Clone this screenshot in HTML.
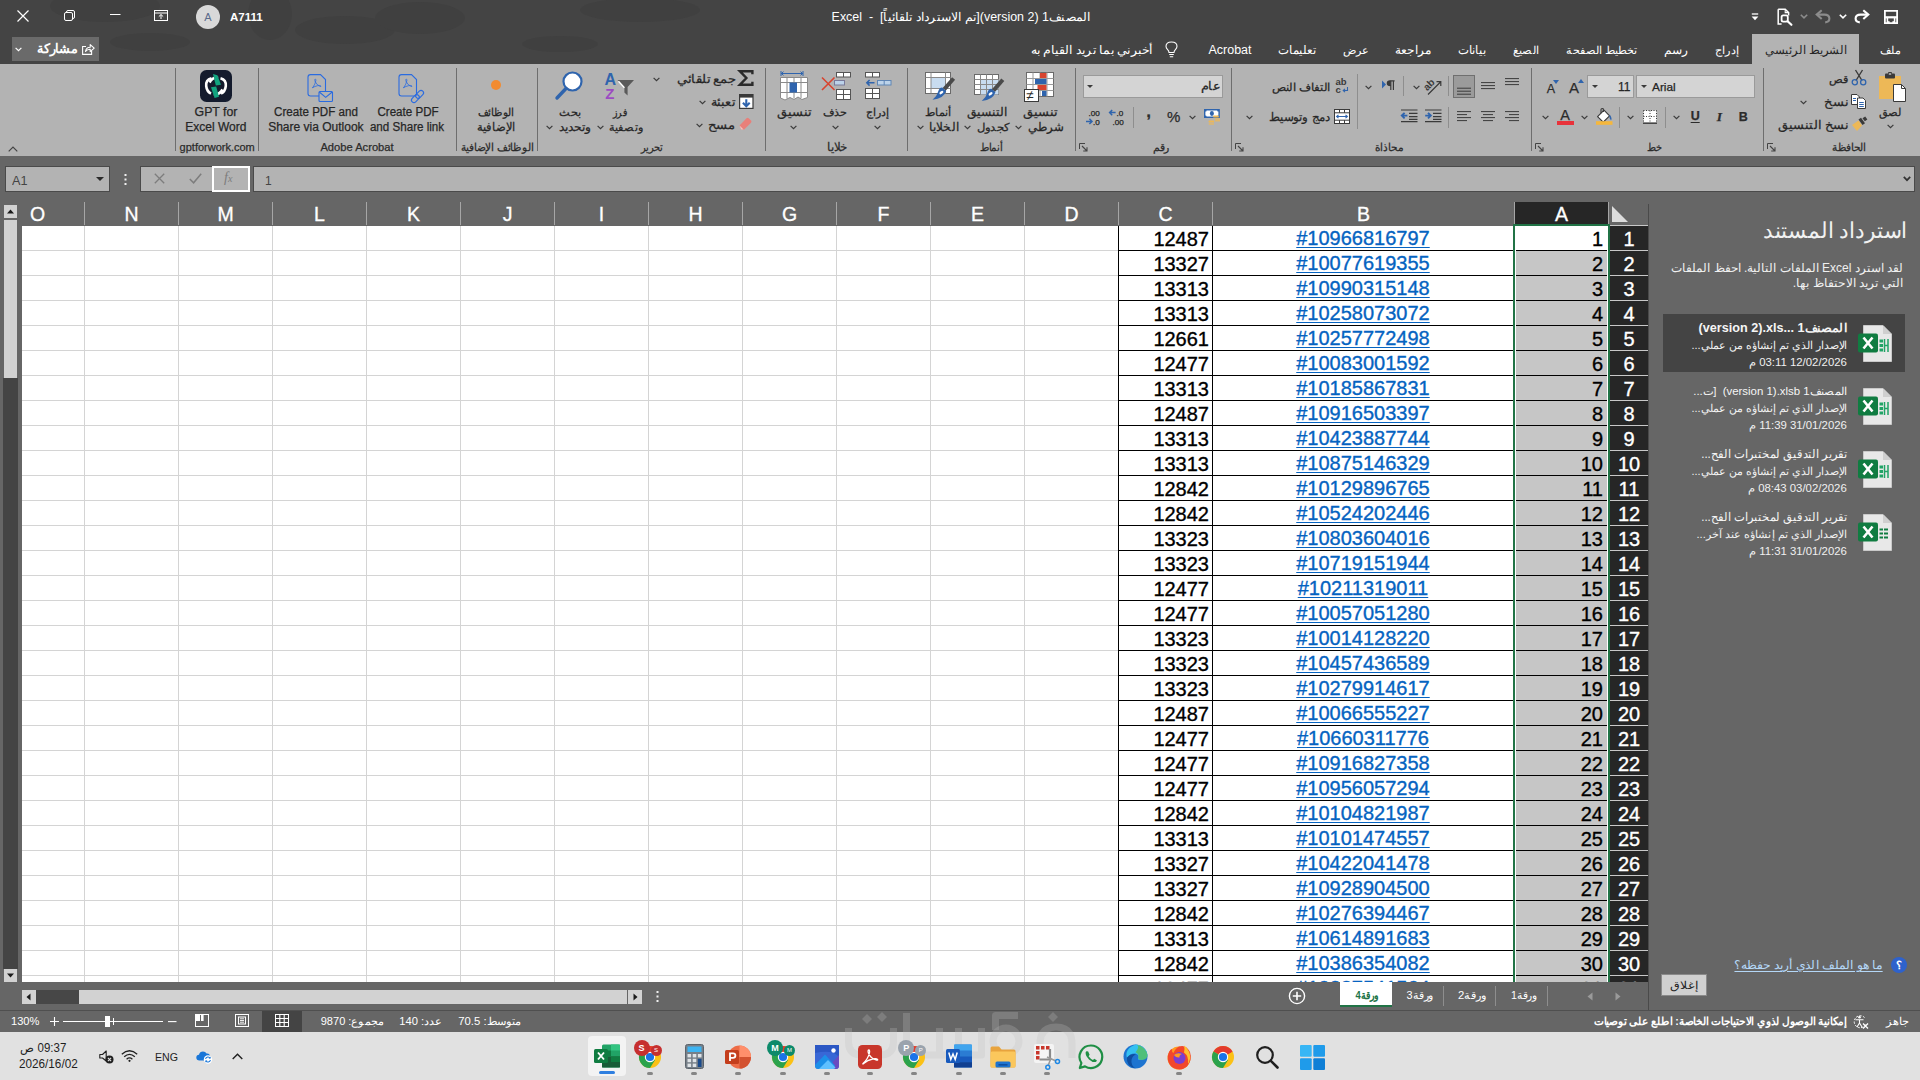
<!DOCTYPE html>
<html lang="ar">
<head>
<meta charset="utf-8">
<title>Excel</title>
<style>
*{box-sizing:border-box;margin:0;padding:0}
html,body{width:1920px;height:1080px;overflow:hidden;background:#666}
body{font-family:"Liberation Sans",sans-serif;font-size:12px;color:#262626;position:relative}
#app{position:absolute;left:0;top:0;width:1920px;height:1080px;overflow:hidden;background:#666}
.a{position:absolute}
.t{position:absolute;white-space:nowrap;line-height:16px;height:16px}
.r{direction:rtl}
.c{transform:translateX(-50%)}
svg{position:absolute;overflow:visible}
/* title */
#title{position:absolute;left:0;top:0;width:1920px;height:64px;background:#444}
.w{color:#fff}
/* ribbon */
#ribbon{position:absolute;left:0;top:64px;width:1920px;height:92px;background:#b3b3b3}
.sep{position:absolute;top:4px;width:1px;height:83px;background:#6e6e6e}
.sp2{position:absolute;width:1px;background:#8e8e8e}
.gl,.lb{-webkit-text-stroke:0.25px currentColor}
.gl{position:absolute;white-space:nowrap;top:75px;line-height:16px;font-size:12px;color:#2b2b2b;transform:translateX(-50%)}
.lb{position:absolute;white-space:nowrap;line-height:16px;font-size:12px;color:#262626}
.box{position:absolute;background:#d4d4d4;border:1px solid #9a9a9a}
/* grid */
.ch{-webkit-text-stroke:0.3px currentColor;position:absolute;top:202px;height:24px;line-height:24px;font-size:19.5px;color:#fff;text-align:center}
.ch.sel{background:#262626;height:22px}
.hs{position:absolute;top:202px;width:1px;height:23px;background:#a6a6a6}
.vl{position:absolute;top:226px;width:1px;height:756px;background:#d4d4d4}
.hl{position:absolute;left:22px;width:1096px;height:1px;background:#d4d4d4}
.bl{position:absolute;background:#000}
.gr{position:absolute;background:#217346}
.cc,.cb,.ca,.rh{position:absolute;height:25px;line-height:26px;font-size:20px;white-space:nowrap;overflow:hidden;-webkit-text-stroke:0.35px currentColor}
.cc{left:1119px;width:93px;text-align:right;padding-right:3px;color:#000;margin-top:1px}
.cb{left:1213px;width:300px;text-align:center;color:#0563c1;margin-top:0}
.cb u{text-decoration:underline;text-decoration-thickness:1px;text-underline-offset:2px}
.ca{left:1516px;width:91px;text-align:right;padding-right:4px;color:#000;background:#c6c6c6}
.ca.act{background:#fff;left:1515px;width:93px;padding-right:5px}
.rh{left:1610px;width:38px;text-align:center;color:#fff;background:#262626;border-bottom:1px solid #c8c8c8}
</style>
</head>
<body>
<div id="app">
<!-- title bar + tabs -->
<div id="title">
<svg style="left:0;top:0" width="1100" height="64" viewBox="0 0 1100 64"><g fill="#404040">
<ellipse cx="105" cy="6" rx="55" ry="16"/><ellipse cx="270" cy="14" rx="22" ry="26"/><ellipse cx="150" cy="42" rx="40" ry="9"/>
<ellipse cx="345" cy="30" rx="50" ry="14"/><ellipse cx="420" cy="18" rx="45" ry="16"/><ellipse cx="640" cy="10" rx="60" ry="12"/><ellipse cx="560" cy="44" rx="38" ry="8"/>
</g></svg>
<!-- window controls (left, RTL layout) -->
<svg style="left:17px;top:10px" width="12" height="12" viewBox="0 0 12 12"><path d="M0.5 0.5 L11.5 11.5 M11.5 0.5 L0.5 11.5" stroke="#fff" stroke-width="1.2" fill="none"/></svg>
<svg style="left:64px;top:10px" width="11" height="11" viewBox="0 0 11 11"><rect x="0.5" y="2.5" width="8" height="8" rx="1.5" stroke="#fff" fill="none"/><path d="M2.5 2.5 V2 Q2.5 0.5 4 0.5 H9 Q10.5 0.5 10.5 2 V7 Q10.5 8.5 9 8.5 H8.5" stroke="#fff" fill="none"/></svg>
<svg style="left:110px;top:14px" width="11" height="2" viewBox="0 0 11 2"><path d="M0 0.5 H10.5" stroke="#fff" stroke-width="1"/></svg>
<svg style="left:154px;top:10px" width="14" height="11" viewBox="0 0 14 11"><rect x="0.5" y="0.5" width="13" height="10" stroke="#fff" fill="none"/><path d="M0.5 3 H13.5" stroke="#fff" fill="none"/><path d="M7 9 V4.7 M4.8 6.6 L7 4.5 L9.2 6.6" stroke="#fff" fill="none" stroke-width="1"/></svg>
<!-- account -->
<div class="a" style="left:196px;top:5px;width:24px;height:24px;border-radius:12px;background:#d9d9d9"></div>
<div class="t c" style="left:208px;top:9px;font-size:11px;color:#5b6b8c">A</div>
<div class="t w" style="left:230px;top:9px;font-weight:bold;font-size:11px;transform-origin:0 50%;transform:scaleX(1.05);">A7111</div>
<!-- document title -->
<div class="t w r c" style="left:961px;top:8.5px;font-size:12px;transform:translateX(-50%) scaleX(1.0361);"><span dir="rtl">المصنف1 (version 2)[تم الاسترداد تلقائياً]</span>&nbsp; - &nbsp;<span dir="ltr">Excel</span></div>
<!-- quick access toolbar (right) -->
<svg style="left:1884px;top:10px" width="14" height="14" viewBox="0 0 14 14"><path d="M0.9 0.9 H13.1 V13.1 H0.9 Z" stroke="#fff" stroke-width="1.8" fill="none"/><rect x="1" y="6.2" width="12" height="2.2" fill="#fff"/><path d="M3.4 8 V13 M10.6 8 V13" stroke="#fff" stroke-width="1.6"/><rect x="3.4" y="11.2" width="2.2" height="2" fill="#fff"/><rect x="8.4" y="11.2" width="2.2" height="2" fill="#fff"/></svg>
<svg style="left:1854px;top:9px" width="16" height="15" viewBox="0 0 16 15"><path d="M9.3 1.2 L14.3 5.6 L9.3 10" stroke="#fff" stroke-width="2.1" fill="none" stroke-linejoin="miter"/><path d="M13.6 5.6 H6.6 Q1.6 5.6 1.6 9.6 Q1.6 13 5.8 13.4" stroke="#fff" stroke-width="2.1" fill="none"/></svg>
<svg style="left:1839px;top:13.5px" width="8" height="5" viewBox="0 0 8 5"><path d="M0.8 0.8 L4 3.9 L7.2 0.8" stroke="#fff" stroke-width="1.6" fill="none"/></svg>
<svg style="left:1815px;top:9px" width="16" height="15" viewBox="0 0 16 15"><path d="M6.7 1.2 L1.7 5.6 L6.7 10" stroke="#8c8c8c" stroke-width="2.1" fill="none"/><path d="M2.4 5.6 H9.4 Q14.4 5.6 14.4 9.6 Q14.4 13 10.2 13.4" stroke="#8c8c8c" stroke-width="2.1" fill="none"/></svg>
<svg style="left:1800px;top:13.5px" width="8" height="5" viewBox="0 0 8 5"><path d="M0.8 0.8 L4 3.9 L7.2 0.8" stroke="#8c8c8c" stroke-width="1.6" fill="none"/></svg>
<svg style="left:1777px;top:8px" width="16" height="18" viewBox="0 0 16 18"><path d="M1.2 1.2 H8.2 L11.6 4.6 V7.5 M1.2 1.2 V16 H4.6" stroke="#fff" stroke-width="1.5" fill="none"/><path d="M8.2 1.2 V4.6 H11.6" stroke="#fff" stroke-width="1.1" fill="none"/><rect x="4.6" y="7.4" width="6.2" height="6.2" rx="1.6" stroke="#fff" stroke-width="1.8" fill="none"/><path d="M10.6 13.2 L14.4 16.8" stroke="#fff" stroke-width="2.2" stroke-linecap="round"/></svg>
<svg style="left:1751px;top:13px" width="8" height="8" viewBox="0 0 8 8"><path d="M0.8 1 H7.2" stroke="#fff" stroke-width="1.3"/><path d="M0.6 3.6 H7.4 L4 7.2 Z" fill="#fff"/></svg>
<!-- share button -->
<div class="a" style="left:12px;top:37px;width:87px;height:24px;background:#6a6a6a"></div>
<svg style="left:82px;top:43px" width="13" height="12" viewBox="0 0 13 12"><path d="M4 3.5 H0.6 V11.4 H9.6 V8" stroke="#fff" stroke-width="1.1" fill="none"/><path d="M3.5 8.5 Q4 4.2 8.2 4.2 V1.6 L12.2 5.2 L8.2 8.6 V6.2 Q5.4 6 3.5 8.5 Z" stroke="#fff" stroke-width="1.1" fill="none" stroke-linejoin="round"/></svg>
<div class="t w r" style="right:1842px;top:41px;font-weight:bold;font-size:13px;transform-origin:100% 50%;transform:scaleX(0.9796);">مشاركة</div>
<svg style="left:15px;top:47px" width="7" height="5" viewBox="0 0 7 5"><path d="M0.6 0.8 L3.5 3.7 L6.4 0.8" stroke="#fff" stroke-width="1.2" fill="none"/></svg>
<!-- tabs -->
<div class="a" style="left:1752px;top:34px;width:107px;height:30px;background:#b3b3b3"></div>
<div class="t w r c" style="left:1890.5px;top:41.5px;font-size:11px;transform:translateX(-50%);">ملف</div>
<div class="t r c" style="left:1805.8px;top:41.5px;font-size:12px;transform:translateX(-50%) scaleX(0.9702);color:#262626">الشريط الرئيسي</div>
<div class="t w r c" style="left:1726.5px;top:41.5px;font-size:11px;transform:translateX(-50%) scaleX(1.0261);">إدراج</div>
<div class="t w r c" style="left:1676px;top:41.5px;font-size:12px;transform:translateX(-50%) scaleX(1.0208);">رسم</div>
<div class="t w r c" style="left:1601.7px;top:41.5px;font-size:11px;transform:translateX(-50%) scaleX(1.0143);">تخطيط الصفحة</div>
<div class="t w r c" style="left:1525.6px;top:41.5px;font-size:11px;transform:translateX(-50%) scaleX(1.02);">الصيغ</div>
<div class="t w r c" style="left:1472.2px;top:41.5px;font-size:12px;transform:translateX(-50%) scaleX(0.9759);">بيانات</div>
<div class="t w r c" style="left:1413.3px;top:41.5px;font-size:12px;transform:translateX(-50%) scaleX(1.0057);">مراجعة</div>
<div class="t w r c" style="left:1356.2px;top:41.5px;font-size:11px;transform:translateX(-50%) scaleX(1.0115);">عرض</div>
<div class="t w r c" style="left:1297.3px;top:41.5px;font-size:12px;transform:translateX(-50%) scaleX(0.9769);">تعليمات</div>
<div class="t w c" style="left:1229.6px;top:41.5px;font-size:12px;transform:translateX(-50%) scaleX(1.0381);">Acrobat</div>
<svg style="left:1165px;top:41px" width="13" height="17" viewBox="0 0 13 17"><path d="M4 11.5 Q4 10 2.6 8.6 Q1 7 1 5.3 Q1 1 6.5 1 Q12 1 12 5.3 Q12 7 10.4 8.6 Q9 10 9 11.5 Z" stroke="#fff" stroke-width="1.1" fill="none"/><path d="M4.2 13.5 H8.8 M4.8 15.8 H8.2" stroke="#fff" stroke-width="1.1"/></svg>
<div class="t w r" style="right:768px;top:41.5px;font-size:12px;transform-origin:100% 50%;transform:scaleX(1.0371);">أخبرني بما تريد القيام به</div>
</div>
<!-- ribbon -->
<div id="ribbon">
<div class="sep" style="left:175px"></div>
<div class="sep" style="left:258px"></div>
<div class="sep" style="left:456px"></div>
<div class="sep" style="left:537px"></div>
<div class="sep" style="left:765px"></div>
<div class="sep" style="left:907px"></div>
<div class="sep" style="left:1075px"></div>
<div class="sep" style="left:1231px"></div>
<div class="sep" style="left:1531px"></div>
<div class="sep" style="left:1763px"></div>
<svg style="left:8px;top:82px" width="10" height="6" viewBox="0 0 10 6"><path d="M0.7 5.3 L5 1 L9.3 5.3" stroke="#444" stroke-width="1.2" fill="none"/></svg>
<!-- clipboard -->
<svg style="left:1878px;top:8px" width="29" height="31" viewBox="0 0 29 31"><rect x="1" y="4" width="22" height="23" fill="#edb857"/><rect x="7" y="1.5" width="10" height="5" rx="1" fill="#3a3a3a"/><rect x="10" y="0" width="4" height="3" rx="1" fill="#3a3a3a"/><rect x="10.8" y="1.2" width="2.4" height="1.6" fill="#b3b3b3"/><path d="M15.5 12.5 H23.5 L27.5 16.5 V29.5 H15.5 Z" fill="#fff" stroke="#3a3a3a" stroke-width="1"/><path d="M23.5 12.5 V16.5 H27.5" fill="none" stroke="#3a3a3a"/></svg>
<div class="lb r" style="top:39.6px;font-size:11px;color:#262626;left:1890.4px;transform:translateX(-50%) scaleX(1.0227);">لصق</div>
<svg style="left:1887px;top:60px" width="7" height="5" viewBox="0 0 7 5"><path d="M0.6 0.8 L3.5 3.7 L6.4 0.8" stroke="#3b3b3b" stroke-width="1.2" fill="none"/></svg>
<svg style="left:1851px;top:5px" width="16" height="17" viewBox="0 0 16 17"><path d="M4.5 1 L11 11.5 M11.5 1 L5 11.5" stroke="#3a3a3a" stroke-width="1.4" fill="none"/><circle cx="3.8" cy="13.2" r="2.6" stroke="#2f64ad" stroke-width="1.3" fill="none"/><circle cx="12.2" cy="13.2" r="2.6" stroke="#2f64ad" stroke-width="1.3" fill="none"/></svg>
<div class="lb r" style="top:6.5px;font-size:11px;color:#262626;right:72px;transform-origin:100% 50%;transform:scaleX(1.0278);">قص</div>
<svg style="left:1851px;top:30px" width="16" height="15" viewBox="0 0 16 15"><path d="M0.5 0.5 H6 L8.5 3 V10.5 H0.5 Z" fill="#fff" stroke="#3a3a3a"/><path d="M6.5 4 H12 L14.5 6.5 V14.5 H6.5 Z" fill="#fff" stroke="#3a3a3a"/><path d="M8.2 8.5 H12.8 M8.2 10.5 H12.8 M8.2 12.5 H12.8" stroke="#2f64ad" stroke-width="1"/><path d="M2 4.5 H5 M2 6.5 H5" stroke="#2f64ad" stroke-width="1"/></svg>
<div class="lb r" style="top:29.5px;font-size:12px;color:#262626;right:72px;transform-origin:100% 50%;transform:scaleX(1.0773);">نسخ</div>
<svg style="left:1799.5px;top:35.5px" width="7" height="5" viewBox="0 0 7 5"><path d="M0.6 0.8 L3.5 3.7 L6.4 0.8" stroke="#3b3b3b" stroke-width="1.2" fill="none"/></svg>
<svg style="left:1851px;top:52px" width="17" height="16" viewBox="0 0 17 16"><path d="M1 9 L7.5 4.5 L11 9.5 L6 15 Z" fill="#edb857"/><path d="M7.5 3.5 L10 1.8 L14 7.2 L11.5 9 Z" fill="#3a3a3a"/><path d="M11.5 2.2 L14.2 0.4 L16.4 3.4 L13.8 5.2 Z" fill="#3a3a3a"/></svg>
<div class="lb r" style="top:52.5px;font-size:12px;color:#262626;right:72px;transform-origin:100% 50%;transform:scaleX(1.0708);">نسخ التنسيق</div>
<div class="gl r" style="left:1849px;font-size:11px;transform:translateX(-50%) scaleX(0.9583);">الحافظة</div>
<svg style="left:1767px;top:79px" width="9" height="9" viewBox="0 0 9 9"><path d="M0.5 6 V0.5 H6" stroke="#444" fill="none"/><path d="M3 3 L8 8 M8 4.2 V8 H4.2" stroke="#444" stroke-width="1.1" fill="none"/></svg>
<!-- font -->
<div class="box" style="left:1636px;top:11px;width:119px;height:23px"></div>
<div class="lb" style="top:15px;font-size:11px;color:#262626;left:1652px;transform-origin:0 50%;transform:scaleX(1.0762);">Arial</div>
<svg style="left:1640.5px;top:21px" width="6" height="3" viewBox="0 0 6 3"><path d="M0 0 H6 L3 3 Z" fill="#3b3b3b"/></svg>
<div class="box" style="left:1587px;top:11px;width:47px;height:23px"></div>
<div class="lb" style="top:15px;font-size:12px;color:#262626;right:289.5px;">11</div>
<svg style="left:1591.5px;top:21px" width="6" height="3" viewBox="0 0 6 3"><path d="M0 0 H6 L3 3 Z" fill="#3b3b3b"/></svg>
<div class="lb" style="top:15.5px;font-size:15px;color:#2b2b2b;left:1574px;transform:translateX(-50%);">A</div>
<svg style="left:1577.5px;top:15px" width="6" height="4" viewBox="0 0 6 4"><path d="M0 4 H6 L3 0 Z" fill="#2f64ad"/></svg>
<div class="lb" style="top:16.5px;font-size:12.5px;color:#2b2b2b;left:1551px;transform:translateX(-50%);">A</div>
<svg style="left:1553px;top:15.5px" width="6" height="4" viewBox="0 0 6 4"><path d="M0 0 H6 L3 4 Z" fill="#2f64ad"/></svg>
<div class="lb" style="top:44.5px;font-size:12.5px;color:#2b2b2b;font-weight:bold;left:1743.3px;transform:translateX(-50%);">B</div>
<div class="lb" style="top:44.5px;font-size:14px;color:#2b2b2b;font-weight:bold;left:1719.5px;transform:translateX(-50%);font-style:italic;font-family:'Liberation Serif',serif;font-size:13.5px;">I</div>
<div class="lb" style="top:44px;font-size:12.5px;color:#2b2b2b;font-weight:bold;left:1695.2px;transform:translateX(-50%);text-decoration:underline;text-underline-offset:2px;">U</div>
<svg style="left:1672.8px;top:51px" width="7" height="5" viewBox="0 0 7 5"><path d="M0.6 0.8 L3.5 3.7 L6.4 0.8" stroke="#3b3b3b" stroke-width="1.2" fill="none"/></svg>
<div class="sp2" style="left:1665px;top:43px;height:21px"></div>
<svg style="left:1643px;top:46px" width="14" height="14" viewBox="0 0 14 14"><rect x="0.5" y="0.5" width="13" height="12" fill="#fff"/><path d="M0.5 0.5 H13.5 M0.5 6.5 H13.5 M0.5 0.5 V12.5 M7 0.5 V12.5 M13.5 0.5 V12.5" stroke="#3a3a3a" stroke-width="1" stroke-dasharray="1 1.5" fill="none"/><path d="M0 13.2 H14" stroke="#3a3a3a" stroke-width="1.4"/></svg>
<svg style="left:1626.9px;top:51px" width="7" height="5" viewBox="0 0 7 5"><path d="M0.6 0.8 L3.5 3.7 L6.4 0.8" stroke="#3b3b3b" stroke-width="1.2" fill="none"/></svg>
<div class="sp2" style="left:1619px;top:43px;height:21px"></div>
<svg style="left:1596px;top:44px" width="17" height="17" viewBox="0 0 17 17"><path d="M1.6 8.6 L8 2.2 L13.6 7.8 L7.2 14.2 Z" fill="#fff" stroke="#3a3a3a" stroke-width="1.2" stroke-linejoin="round"/><path d="M7.4 4 V1.6 Q7.4 0.5 6.2 0.5 Q5 0.5 5 1.6 V5.2" stroke="#3a3a3a" stroke-width="1.1" fill="none"/><path d="M13.4 6.4 Q16.6 9.6 15 12.6 Q13 10.6 13.4 6.4 Z" fill="#2f64ad"/><rect x="0" y="13.2" width="16.5" height="3.6" fill="#f5b73c"/></svg>
<svg style="left:1580.7px;top:51px" width="7" height="5" viewBox="0 0 7 5"><path d="M0.6 0.8 L3.5 3.7 L6.4 0.8" stroke="#3b3b3b" stroke-width="1.2" fill="none"/></svg>
<div class="lb" style="top:43.3px;font-size:14.5px;color:#2b2b2b;left:1565px;transform:translateX(-50%);">A</div>
<div class="a" style="left:1557px;top:57.2px;width:16.5px;height:3.6px;background:#e8323a"></div>
<svg style="left:1541.9px;top:51px" width="7" height="5" viewBox="0 0 7 5"><path d="M0.6 0.8 L3.5 3.7 L6.4 0.8" stroke="#3b3b3b" stroke-width="1.2" fill="none"/></svg>
<div class="gl r" style="left:1654.8px;font-size:11px;transform:translateX(-50%) scaleX(0.8824);">خط</div>
<svg style="left:1535px;top:79px" width="9" height="9" viewBox="0 0 9 9"><path d="M0.5 6 V0.5 H6" stroke="#444" fill="none"/><path d="M3 3 L8 8 M8 4.2 V8 H4.2" stroke="#444" stroke-width="1.1" fill="none"/></svg>
<!-- alignment -->
<svg style="left:1505px;top:12px" width="14" height="20" viewBox="0 0 14 20"><path d="M0 2.6 H14 M0 5.6 H14 M0 8.6 H14 " stroke="#3a3a3a" stroke-width="1" fill="none"/></svg>
<svg style="left:1481px;top:12px" width="14" height="20" viewBox="0 0 14 20"><path d="M0 6.6 H14 M0 9.6 H14 M0 12.6 H14 " stroke="#3a3a3a" stroke-width="1" fill="none"/></svg>
<div class="a" style="left:1453px;top:11px;width:22px;height:23px;background:#9b9b9b;border:1px solid #6f6f6f"></div>
<svg style="left:1457px;top:12px" width="14" height="20" viewBox="0 0 14 20"><path d="M0 12.2 H14 M0 15.2 H14 M0 18.2 H14 " stroke="#3a3a3a" stroke-width="1" fill="none"/></svg>
<div class="sp2" style="left:1448px;top:12px;height:20px"></div>
<svg style="left:1424px;top:13px" width="18" height="18" viewBox="0 0 18 18"><text x="1" y="11" font-size="10" font-family="Liberation Sans" fill="#3a3a3a" transform="rotate(-45 6 10)" style="font-weight:bold">ab</text><path d="M4 17.5 L16.5 5 M12.5 4.6 L16.8 4.6 L16.8 9" stroke="#3a3a3a" stroke-width="1.2" fill="none"/></svg>
<svg style="left:1412.5px;top:20.5px" width="7" height="5" viewBox="0 0 7 5"><path d="M0.6 0.8 L3.5 3.7 L6.4 0.8" stroke="#3b3b3b" stroke-width="1.2" fill="none"/></svg>
<div class="sp2" style="left:1403px;top:12px;height:20px"></div>
<svg style="left:1382px;top:16px" width="13" height="11" viewBox="0 0 13 11"><path d="M0 0.5 L4 4.5 L0 8.5 Z" fill="#2f64ad"/><path d="M8.8 10 V0.8 M11.4 10 V0.8 M12.6 0.8 H8 Q5.3 0.8 5.3 3.2 Q5.3 5.6 8.6 5.6" stroke="#3a3a3a" stroke-width="1.2" fill="none"/><path d="M8.6 0.8 Q5.3 0.8 5.3 3.2 Q5.3 5.6 8.6 5.6 Z" fill="#3a3a3a"/></svg>
<svg style="left:1364.9px;top:20.5px" width="7" height="5" viewBox="0 0 7 5"><path d="M0.6 0.8 L3.5 3.7 L6.4 0.8" stroke="#3b3b3b" stroke-width="1.2" fill="none"/></svg>
<div class="sp2" style="left:1357px;top:10px;height:55px"></div>
<svg style="left:1335px;top:13px" width="14" height="18" viewBox="0 0 14 18"><text x="0.5" y="7.5" font-size="9.5" font-family="Liberation Sans" fill="#3a3a3a" style="font-weight:bold">ab</text><text x="0.5" y="15.5" font-size="9.5" font-family="Liberation Sans" fill="#3a3a3a" style="font-weight:bold">c</text><path d="M12.5 10 V13.5 H8.2 M10 11.8 L8.2 13.5 L10 15.2" stroke="#2f64ad" stroke-width="1.1" fill="none"/></svg>
<div class="lb r" style="top:14.5px;font-size:11px;color:#262626;right:589.5px;transform-origin:100% 50%;transform:scaleX(1.0685);">التفاف النص</div>
<svg style="left:1505px;top:46px" width="14" height="14" viewBox="0 0 14 14"><path d="M0 1.6 H14 M4 4.6 H14 M0 7.6 H14 M4 10.6 H14 " stroke="#3a3a3a" stroke-width="1" fill="none"/></svg>
<svg style="left:1481px;top:46px" width="14" height="14" viewBox="0 0 14 14"><path d="M0 1.6 H14 M2 4.6 H12 M0 7.6 H14 M2 10.6 H12 " stroke="#3a3a3a" stroke-width="1" fill="none"/></svg>
<svg style="left:1457px;top:46px" width="14" height="14" viewBox="0 0 14 14"><path d="M0 1.6 H14 M0 4.6 H10 M0 7.6 H14 M0 10.6 H10 " stroke="#3a3a3a" stroke-width="1" fill="none"/></svg>
<div class="sp2" style="left:1448px;top:43px;height:21px"></div>
<svg style="left:1424.5px;top:45px" width="17" height="14" viewBox="0 0 17 14"><path d="M0 1 H16.5 M8 4.4 H16.5 M8 7.6 H16.5 M0 12.6 H16.5 M8 10.4 H16.5" stroke="#3a3a3a" stroke-width="1.1" fill="none"/><path d="M0.2 6.6 H5.8 M3 3.8 L5.8 6.6 L3 9.4" stroke="#2f64ad" stroke-width="1.9" fill="none"/></svg>
<svg style="left:1401px;top:45px" width="17" height="14" viewBox="0 0 17 14"><path d="M0 1 H16.5 M8 4.4 H16.5 M8 7.6 H16.5 M0 12.6 H16.5 M8 10.4 H16.5" stroke="#3a3a3a" stroke-width="1.1" fill="none"/><path d="M0.8 6.6 H6.4 M3.6 3.8 L0.8 6.6 L3.6 9.4" stroke="#2f64ad" stroke-width="1.9" fill="none"/></svg>
<svg style="left:1334px;top:45px" width="16" height="15" viewBox="0 0 16 15"><rect x="0.5" y="0.5" width="15" height="14" fill="#fff" stroke="#3a3a3a"/><path d="M0.5 3.8 H15.5 M0.5 11.2 H15.5 M5.5 0.5 V3.8 M10.5 0.5 V3.8 M5.5 11.2 V14.5 M10.5 11.2 V14.5" stroke="#3a3a3a" stroke-width="1" fill="none"/><path d="M2.5 7.5 H13.5 M4.5 5.8 L2.6 7.5 L4.5 9.2 M11.5 5.8 L13.4 7.5 L11.5 9.2" stroke="#2f64ad" stroke-width="1.1" fill="none"/></svg>
<div class="lb r" style="top:44.5px;font-size:12px;color:#262626;right:589.5px;transform-origin:100% 50%;transform:scaleX(0.9871);">دمج وتوسيط</div>
<svg style="left:1245.9px;top:51px" width="7" height="5" viewBox="0 0 7 5"><path d="M0.6 0.8 L3.5 3.7 L6.4 0.8" stroke="#3b3b3b" stroke-width="1.2" fill="none"/></svg>
<div class="gl r" style="left:1389px;font-size:11px;transform:translateX(-50%) scaleX(0.9533);">محاذاة</div>
<svg style="left:1235px;top:79px" width="9" height="9" viewBox="0 0 9 9"><path d="M0.5 6 V0.5 H6" stroke="#444" fill="none"/><path d="M3 3 L8 8 M8 4.2 V8 H4.2" stroke="#444" stroke-width="1.1" fill="none"/></svg>
<!-- number -->
<div class="box" style="left:1083px;top:11px;width:140px;height:23px"></div>
<div class="lb r" style="top:14px;font-size:12px;color:#262626;right:700.5px;transform-origin:100% 50%;transform:scaleX(1.0611);">عام</div>
<svg style="left:1087.4px;top:21px" width="6" height="3" viewBox="0 0 6 3"><path d="M0 0 H6 L3 3 Z" fill="#3b3b3b"/></svg>
<svg style="left:1203.5px;top:45px" width="17" height="16" viewBox="0 0 17 16"><rect x="0" y="0" width="15.8" height="9" fill="#2f64ad"/><path d="M1.4 2.6 Q2.6 2.6 2.6 1.4 H13.2 Q13.2 2.6 14.4 2.6 V6.4 Q13.2 6.4 13.2 7.6 H2.6 Q2.6 6.4 1.4 6.4 Z" fill="#fff"/><ellipse cx="7.9" cy="4.5" rx="2" ry="2.4" fill="#2f64ad"/><g fill="#edb857"><rect x="9.2" y="6.4" width="5.6" height="2.2" rx="0.6"/><rect x="11" y="9.4" width="5" height="1.2"/><rect x="11" y="11.2" width="5" height="1.2"/><rect x="4.6" y="11.4" width="5.6" height="2.2" rx="0.6"/><rect x="4.8" y="14.4" width="5.2" height="1.2"/></g></svg>
<svg style="left:1188.7px;top:51px" width="7" height="5" viewBox="0 0 7 5"><path d="M0.6 0.8 L3.5 3.7 L6.4 0.8" stroke="#3b3b3b" stroke-width="1.2" fill="none"/></svg>
<div class="lb" style="top:45px;font-size:15px;color:#2b2b2b;left:1173.6px;transform:translateX(-50%);">%</div>
<div class="lb" style="top:39.5px;font-size:17px;color:#2b2b2b;font-weight:bold;left:1148.5px;transform:translateX(-50%);">,</div>
<div class="sp2" style="left:1133px;top:43px;height:21px"></div>
<svg style="left:1109.4px;top:45px" width="17" height="17" viewBox="0 0 17 17"><path d="M0.6 3.6 H6.6 M3.2 1 L0.6 3.6 L3.2 6.2" stroke="#2f64ad" stroke-width="1.5" fill="none"/><text x="7.6" y="7" font-size="8.1" font-family="Liberation Sans" fill="#222" stroke="#222" stroke-width="0.25">.0</text><text x="3.4" y="15.6" font-size="8.1" font-family="Liberation Sans" fill="#222" stroke="#222" stroke-width="0.25">.00</text></svg>
<svg style="left:1085.6px;top:45px" width="17" height="17" viewBox="0 0 17 17"><path d="M0 12.4 H6 M3.4 9.8 L6 12.4 L3.4 15" stroke="#2f64ad" stroke-width="1.5" fill="none"/><text x="2.6" y="7" font-size="8.1" font-family="Liberation Sans" fill="#222" stroke="#222" stroke-width="0.25">.00</text><text x="7" y="15.6" font-size="8.1" font-family="Liberation Sans" fill="#222" stroke="#222" stroke-width="0.25">.0</text></svg>
<div class="gl r" style="left:1161.2px;font-size:11px;transform:translateX(-50%) scaleX(0.9882);">رقم</div>
<svg style="left:1079px;top:79px" width="9" height="9" viewBox="0 0 9 9"><path d="M0.5 6 V0.5 H6" stroke="#444" fill="none"/><path d="M3 3 L8 8 M8 4.2 V8 H4.2" stroke="#444" stroke-width="1.1" fill="none"/></svg>
<!-- styles -->
<svg style="left:1024px;top:8px" width="30" height="30" viewBox="0 0 30 30"><rect x="2.5" y="0.5" width="27" height="24" fill="#fff" stroke="#6a6a6a"/><path d="M2.5 6.5 H29.5 M2.5 12.5 H29.5 M2.5 18.5 H29.5 M9 0.5 V24.5 M16 0.5 V24.5 M23 0.5 V24.5" stroke="#9a9a9a" stroke-width="1" fill="none"/><rect x="16" y="1" width="6.5" height="5" fill="#d8442f"/><rect x="11" y="7" width="11.5" height="5" fill="#2f64ad"/><rect x="13.5" y="13" width="9" height="5" fill="#d8442f"/><rect x="18" y="19" width="4.5" height="5" fill="#2f64ad"/><rect x="0.5" y="17.5" width="14" height="12" fill="#fff" stroke="#3a3a3a"/><text x="2.2" y="28.2" font-size="13.5" font-family="Liberation Sans" fill="#2b2b2b">≠</text></svg>
<div class="lb r" style="top:40px;font-size:12px;color:#262626;left:1039.5px;transform:translateX(-50%) scaleX(1.0781);">تنسيق</div>
<div class="lb r" style="top:54.5px;font-size:12px;color:#262626;left:1045.6px;transform:translateX(-50%) scaleX(0.9811);">شرطي</div>
<svg style="left:1015px;top:60.5px" width="7" height="5" viewBox="0 0 7 5"><path d="M0.6 0.8 L3.5 3.7 L6.4 0.8" stroke="#3b3b3b" stroke-width="1.2" fill="none"/></svg>
<svg style="left:974px;top:10px" width="30" height="28" viewBox="0 0 30 28"><rect x="0.5" y="0.5" width="24" height="20" fill="#fff" stroke="#6a6a6a"/><rect x="6.5" y="5.5" width="18" height="15" fill="#c8dcf0"/><path d="M0.5 5.5 H24.5 M0.5 10.5 H24.5 M0.5 15.5 H24.5 M6.5 0.5 V20.5 M12.5 0.5 V20.5 M18.5 0.5 V20.5" stroke="#8a8a8a" stroke-width="1" fill="none"/><g transform="translate(0.2 -0.8)"><path d="M30.1 7.8 L27.1 5.2 L17.7 16.1 L20.7 18.7 Z" fill="#4a4a4a"/><path d="M17.2 15.6 L21.2 19 Q19 26.4 7.5 27.8 Q12 24 13 20 Q14.4 15.4 17.2 15.6 Z" fill="#2f64ad"/><ellipse cx="16.4" cy="20.6" rx="2.3" ry="1.3" fill="#fff" transform="rotate(-38 16.4 20.6)"/></g></svg>
<div class="lb r" style="top:40px;font-size:12px;color:#262626;left:986.9px;transform:translateX(-50%) scaleX(1.025);">التنسيق</div>
<div class="lb r" style="top:54.5px;font-size:11px;color:#262626;left:992.5px;transform:translateX(-50%) scaleX(1.0581);">كجدول</div>
<svg style="left:964px;top:60.5px" width="7" height="5" viewBox="0 0 7 5"><path d="M0.6 0.8 L3.5 3.7 L6.4 0.8" stroke="#3b3b3b" stroke-width="1.2" fill="none"/></svg>
<svg style="left:925px;top:8px" width="30" height="30" viewBox="0 0 30 30"><rect x="0.5" y="0.5" width="25" height="21" fill="#fff" stroke="#6a6a6a"/><rect x="6" y="5.5" width="14.5" height="11" fill="#c8dcf0"/><path d="M0.5 5.5 H25.5 M0.5 16.5 H25.5 M6 0.5 V21.5 M20.5 0.5 V21.5" stroke="#8a8a8a" stroke-width="1" fill="none"/><path d="M30.1 7.8 L27.1 5.2 L17.7 16.1 L20.7 18.7 Z" fill="#4a4a4a"/><path d="M17.2 15.6 L21.2 19 Q19 26.4 7.5 27.8 Q12 24 13 20 Q14.4 15.4 17.2 15.6 Z" fill="#2f64ad"/><ellipse cx="16.4" cy="20.6" rx="2.3" ry="1.3" fill="#fff" transform="rotate(-38 16.4 20.6)"/></svg>
<div class="lb r" style="top:40px;font-size:11px;color:#262626;left:938px;transform:translateX(-50%) scaleX(1.02);">أنماط</div>
<div class="lb r" style="top:54.5px;font-size:12px;color:#262626;left:943.8px;transform:translateX(-50%) scaleX(1.0069);">الخلايا</div>
<svg style="left:917px;top:60.5px" width="7" height="5" viewBox="0 0 7 5"><path d="M0.6 0.8 L3.5 3.7 L6.4 0.8" stroke="#3b3b3b" stroke-width="1.2" fill="none"/></svg>
<div class="gl r" style="left:991.2px;font-size:11px;transform:translateX(-50%) scaleX(0.92);">أنماط</div>
<!-- cells -->
<svg style="left:865px;top:8px" width="27" height="28" viewBox="0 0 27 28"><rect x="0.5" y="0.5" width="14" height="4.5" fill="#fff" stroke="#555"/><path d="M7.5 0.5 V5.0" stroke="#555"/><rect x="0.5" y="16.5" width="14" height="10" fill="#fff" stroke="#555"/><path d="M7.5 16.5 V26.5" stroke="#555"/><path d="M0.5 21.5 H14.5" stroke="#555"/><rect x="12.5" y="8.5" width="13.5" height="4.5" fill="#bcd3ea" stroke="#5f86b5"/><path d="M19.2 8.5 V13" stroke="#5f86b5"/><path d="M2 10.8 H9.5 M4.6 8 L1.8 10.8 L4.6 13.6" stroke="#2f64ad" stroke-width="1.5" fill="none"/></svg>
<div class="lb r" style="top:40.2px;font-size:11px;color:#262626;left:877.6px;transform:translateX(-50%);">إدراج</div>
<svg style="left:874px;top:60.6px" width="7" height="5" viewBox="0 0 7 5"><path d="M0.6 0.8 L3.5 3.7 L6.4 0.8" stroke="#3b3b3b" stroke-width="1.2" fill="none"/></svg>
<svg style="left:821px;top:8px" width="30" height="28" viewBox="0 0 30 28"><rect x="15.5" y="0.5" width="14" height="4.5" fill="#fff" stroke="#555"/><path d="M22.5 0.5 V5.0" stroke="#555"/><rect x="15.5" y="17.5" width="14" height="10" fill="#fff" stroke="#555"/><path d="M22.5 17.5 V27.5" stroke="#555"/><path d="M15.5 22.5 H29.5" stroke="#555"/><rect x="13.5" y="8.5" width="10" height="4.5" fill="#bcd3ea" stroke="#7a7a9a"/><path d="M1 5.5 L13.5 18 M13.5 5.5 L1 18" stroke="#d8442f" stroke-width="1.6" fill="none"/></svg>
<div class="lb r" style="top:40.2px;font-size:11px;color:#262626;left:835.3px;transform:translateX(-50%) scaleX(1.0167);">حذف</div>
<svg style="left:832px;top:60.6px" width="7" height="5" viewBox="0 0 7 5"><path d="M0.6 0.8 L3.5 3.7 L6.4 0.8" stroke="#3b3b3b" stroke-width="1.2" fill="none"/></svg>
<svg style="left:780px;top:6px" width="28" height="32" viewBox="0 0 28 32"><path d="M1 3.5 H23 M1 1 V6 M23 1 V6 M3.5 1.6 L1.4 3.5 L3.5 5.4 M20.5 1.6 L22.6 3.5 L20.5 5.4" stroke="#2f64ad" stroke-width="1" fill="none"/><path d="M0.5 7.5 H27.5 V27.5 L22 29.5 L18 27 L14 29.5 L10 27.5 L5 30 L0.5 28 Z" fill="#fff" stroke="#8a8a8a" stroke-width="1"/><path d="M0.5 12.5 H27.5 M0.5 22.5 H27.5 M7 7.5 V28.5 M21 7.5 V28 M14 22.5 V28.5 M14 7.5 V12.5" stroke="#8a8a8a" stroke-width="1" fill="none"/><rect x="9.5" y="12.5" width="7.5" height="10" fill="#2f64ad"/></svg>
<div class="lb r" style="top:40.2px;font-size:12px;color:#262626;left:793.6px;transform:translateX(-50%) scaleX(1.0719);">تنسيق</div>
<svg style="left:790px;top:60.6px" width="7" height="5" viewBox="0 0 7 5"><path d="M0.6 0.8 L3.5 3.7 L6.4 0.8" stroke="#3b3b3b" stroke-width="1.2" fill="none"/></svg>
<div class="gl r" style="left:836.5px;font-size:12px;transform:translateX(-50%) scaleX(0.9857);">خلايا</div>
<!-- editing -->
<svg style="left:738px;top:6px" width="16" height="16" viewBox="0 0 16 16"><path d="M14.4 4.2 V1.2 H1.8 L8.4 8 L1.8 14.8 H14.4 V11.8" stroke="#2b2b2b" stroke-width="2.4" fill="none" stroke-linejoin="miter"/></svg>
<div class="lb r" style="top:7px;font-size:12px;color:#262626;right:1184.8px;transform-origin:100% 50%;transform:scaleX(1.0925);">جمع تلقائي</div>
<svg style="left:652.8px;top:13px" width="7" height="5" viewBox="0 0 7 5"><path d="M0.6 0.8 L3.5 3.7 L6.4 0.8" stroke="#3b3b3b" stroke-width="1.2" fill="none"/></svg>
<svg style="left:739px;top:29.5px" width="15" height="15" viewBox="0 0 15 15"><rect x="0.6" y="0.6" width="13.4" height="13.8" fill="#fff" stroke="#3a3a3a" stroke-width="1.2"/><rect x="0.6" y="0.6" width="13.4" height="3" fill="#3a3a3a"/><path d="M7.3 5.2 V12 M3.9 8.8 L7.3 12.2 L10.7 8.8" stroke="#2f64ad" stroke-width="2.1" fill="none"/></svg>
<div class="lb r" style="top:29.5px;font-size:12px;color:#262626;right:1184.8px;transform-origin:100% 50%;transform:scaleX(1.0609);">تعبئة</div>
<svg style="left:698.8px;top:36px" width="7" height="5" viewBox="0 0 7 5"><path d="M0.6 0.8 L3.5 3.7 L6.4 0.8" stroke="#3b3b3b" stroke-width="1.2" fill="none"/></svg>
<svg style="left:739px;top:53px" width="13" height="13" viewBox="0 0 13 13"><path d="M0.5 8.5 L7.5 1.2 Q8.6 0.2 9.7 1.2 L12 3.5 Q13 4.6 12 5.7 L5.2 12.6 H2.2 Z" fill="#e8807a"/><path d="M0.5 8.5 L4.6 12.6 H2.2 Z" fill="#f3c4c0"/></svg>
<div class="lb r" style="top:52.5px;font-size:12px;color:#262626;right:1184.8px;transform-origin:100% 50%;transform:scaleX(1.096);">مسح</div>
<svg style="left:695.7px;top:59px" width="7" height="5" viewBox="0 0 7 5"><path d="M0.6 0.8 L3.5 3.7 L6.4 0.8" stroke="#3b3b3b" stroke-width="1.2" fill="none"/></svg>
<svg style="left:605px;top:8px" width="30" height="28" viewBox="0 0 30 28"><text x="-0.5" y="12.5" font-size="16" font-family="Liberation Sans" fill="#2f64ad" style="font-weight:bold">A</text><text x="0.3" y="27" font-size="15" font-family="Liberation Sans" fill="#9c4bc2" style="font-weight:bold">Z</text><path d="M12.5 8 H29 L22.6 15 V23.5 L19.4 20.5 V15 Z" fill="#5a5a5a"/><path d="M13.5 9.2 L19.4 15.8" stroke="#fff" stroke-width="1.3"/></svg>
<div class="lb r" style="top:40.2px;font-size:11px;color:#262626;left:620.4px;transform:translateX(-50%) scaleX(0.8375);">فرز</div>
<div class="lb r" style="top:54.5px;font-size:11px;color:#262626;left:626px;transform:translateX(-50%) scaleX(1.0152);">وتصفية</div>
<svg style="left:596.5px;top:60.5px" width="7" height="5" viewBox="0 0 7 5"><path d="M0.6 0.8 L3.5 3.7 L6.4 0.8" stroke="#3b3b3b" stroke-width="1.2" fill="none"/></svg>
<svg style="left:555px;top:7px" width="30" height="30" viewBox="0 0 30 30"><circle cx="17.5" cy="10.5" r="9" fill="#fff" stroke="#2f64ad" stroke-width="2.2"/><path d="M11 17.5 L2 27" stroke="#2f64ad" stroke-width="3.4" stroke-linecap="round"/></svg>
<div class="lb r" style="top:40.2px;font-size:11px;color:#262626;left:570px;transform:translateX(-50%) scaleX(1.0333);">بحث</div>
<div class="lb r" style="top:54.5px;font-size:12px;color:#262626;left:575.3px;transform:translateX(-50%) scaleX(1.0156);">وتحديد</div>
<svg style="left:546px;top:60.5px" width="7" height="5" viewBox="0 0 7 5"><path d="M0.6 0.8 L3.5 3.7 L6.4 0.8" stroke="#3b3b3b" stroke-width="1.2" fill="none"/></svg>
<div class="gl r" style="left:652px;font-size:11px;transform:translateX(-50%) scaleX(0.892);">تحرير</div>
<!-- add-ins -->
<div class="a" style="left:490.5px;top:16px;width:10px;height:10px;border-radius:5px;background:#f28b30"></div>
<div class="lb r" style="top:39.5px;font-size:11px;color:#262626;left:496.4px;transform:translateX(-50%) scaleX(0.9605);">الوظائف</div>
<div class="lb r" style="top:54.5px;font-size:12px;color:#262626;left:496.2px;transform:translateX(-50%) scaleX(0.9575);">الإضافية</div>
<div class="gl r" style="left:496.9px;font-size:11px;transform:translateX(-50%) scaleX(0.9592);">الوظائف الإضافية</div>
<!-- adobe acrobat -->
<svg style="left:397.5px;top:10px" width="26" height="28" viewBox="0 0 26 28"><path d="M3.5 0.6 H13.5 L18.5 5.5 V20 Q18.5 22 16.5 22 H3.5 Q1 22 1 19.5 V3 Q1 0.6 3.5 0.6 Z" stroke="#2a6be0" stroke-width="1.1" fill="none"/><path d="M5.5 14 Q8.4 10 8.9 6.4 Q9 5 8.3 5 Q7.4 5.2 8.1 7.4 Q9.3 10.8 13 12.4 Q14.2 12.8 14 12 Q13.2 11.2 10.6 11.7 Q8 12.2 5.2 13.8" stroke="#2a6be0" stroke-width="0.8" fill="none"/><g transform="translate(1.5 1.5) rotate(-45 18 21)"><rect x="10.5" y="18.5" width="9" height="5" rx="2.5" stroke="#2a6be0" stroke-width="1.1" fill="#b3b3b3"/><rect x="16.5" y="18.5" width="9" height="5" rx="2.5" stroke="#2a6be0" stroke-width="1.1" fill="none"/></g></svg>
<div class="lb" style="top:39.8px;font-size:12px;color:#262626;left:407.6px;transform:translateX(-50%) scaleX(0.9656);">Create PDF</div>
<div class="lb" style="top:55.2px;font-size:12px;color:#262626;left:407.1px;transform:translateX(-50%) scaleX(0.9671);">and Share link</div>
<svg style="left:306.5px;top:10px" width="26" height="28" viewBox="0 0 26 28"><path d="M3.5 0.6 H13.5 L18.5 5.5 V20 Q18.5 22 16.5 22 H3.5 Q1 22 1 19.5 V3 Q1 0.6 3.5 0.6 Z" stroke="#2a6be0" stroke-width="1.1" fill="none"/><path d="M5.5 14 Q8.4 10 8.9 6.4 Q9 5 8.3 5 Q7.4 5.2 8.1 7.4 Q9.3 10.8 13 12.4 Q14.2 12.8 14 12 Q13.2 11.2 10.6 11.7 Q8 12.2 5.2 13.8" stroke="#2a6be0" stroke-width="0.8" fill="none"/><rect x="12" y="17.5" width="13.5" height="10" rx="1" fill="#b3b3b3" stroke="#2a6be0" stroke-width="1.1"/><path d="M12.3 18 L18.7 23.4 L25.2 18" stroke="#2a6be0" stroke-width="1.1" fill="none"/></svg>
<div class="lb" style="top:39.8px;font-size:12px;color:#262626;left:316.3px;transform:translateX(-50%) scaleX(0.9659);">Create PDF and</div>
<div class="lb" style="top:55.2px;font-size:12px;color:#262626;left:315.9px;transform:translateX(-50%);">Share via Outlook</div>
<div class="gl" style="left:357px;font-size:11px;transform:translateX(-50%) scaleX(1.0141);">Adobe Acrobat</div>
<!-- gpt for work -->
<svg style="left:200px;top:6px" width="32" height="32" viewBox="0 0 32 32"><rect x="0" y="0" width="32" height="32" rx="6.5" fill="#141b2d"/><g stroke="#fff" stroke-width="2.6" fill="none"><path d="M11.5 8.2 Q5.5 10 6.2 16 Q6.8 21.5 11 23.6"/><path d="M20.5 8.2 Q26.5 10 25.8 16 Q25.2 21.5 21 23.6"/><path d="M9.5 12.5 Q13 6.5 18 8"/><path d="M22.5 19.5 Q19 25.5 14 24"/></g><path d="M13 4 L17.4 5.2 L21 14.8 L15.8 15.6 Z" fill="#12a37f"/><path d="M11 17.2 L16.2 16.4 L19 26.8 L14.6 28 Z" fill="#12a37f"/></svg>
<div class="lb" style="top:39.8px;font-size:12px;color:#262626;left:216.2px;transform:translateX(-50%) scaleX(1.0244);">GPT for</div>
<div class="lb" style="top:55.2px;font-size:12px;color:#262626;left:215.9px;transform:translateX(-50%);">Excel Word</div>
<div class="gl" style="left:217.2px;font-size:11px;transform:translateX(-50%);">gptforwork.com</div>
</div>
<!-- formula bar -->
<div id="fbar" class="a" style="left:0;top:156px;width:1920px;height:46px">
<div class="a" style="left:5px;top:10px;width:105px;height:26px;background:#b3b3b3;border:1px solid #4a4a4a"></div>
<div class="t" style="left:12px;top:16.5px;font-size:12px;transform-origin:0 50%;transform:scaleX(1.0533);color:#444">A1</div>
<svg style="left:96px;top:21px" width="8" height="4" viewBox="0 0 8 4"><path d="M0 0 H8 L4 4 Z" fill="#2b2b2b"/></svg>
<svg style="left:124px;top:18px" width="3" height="11" viewBox="0 0 3 11"><rect x="0.5" y="0" width="2" height="2" fill="#f0f0f0"/><rect x="0.5" y="4.5" width="2" height="2" fill="#f0f0f0"/><rect x="0.5" y="9" width="2" height="2" fill="#f0f0f0"/></svg>
<div class="a" style="left:140px;top:10px;width:110px;height:26px;background:#b3b3b3;border:1px solid #4a4a4a"></div>
<svg style="left:154px;top:17px" width="11" height="11" viewBox="0 0 11 11"><path d="M0.8 0.8 L10.2 10.2 M10.2 0.8 L0.8 10.2" stroke="#7d7d7d" stroke-width="1.3" fill="none"/></svg>
<svg style="left:189px;top:17px" width="13" height="11" viewBox="0 0 13 11"><path d="M0.8 6 L4.6 9.8 L12.2 0.8" stroke="#7d7d7d" stroke-width="1.5" fill="none"/></svg>
<div class="a" style="left:212px;top:10px;width:38px;height:26px;border:2px solid #fff"></div>
<div class="t" style="left:224px;top:14px;font-size:14px;color:#7d7d7d;font-family:'Liberation Serif',serif;font-style:italic">f<span style="font-size:10px">x</span></div>
<div class="a" style="left:253px;top:10px;width:1662px;height:26px;background:#b3b3b3;border:1px solid #4a4a4a"></div>
<div class="t" style="left:265px;top:16.5px;font-size:12px;color:#444">1</div>
<svg style="left:1902.5px;top:19.5px" width="8" height="6" viewBox="0 0 8 6"><path d="M0.8 0.9 L4 4.2 L7.2 0.9" stroke="#333" stroke-width="1.7" fill="none"/></svg>
</div>
<!-- grid -->
<div id="grid">
<div class="a" style="left:22px;top:226px;width:1586px;height:756px;background:#fff"></div>
<div class="ch" style="left:-9px;width:93px">O</div>
<div class="ch" style="left:85px;width:93px">N</div>
<div class="ch" style="left:179px;width:93px">M</div>
<div class="ch" style="left:273px;width:93px">L</div>
<div class="ch" style="left:367px;width:93px">K</div>
<div class="ch" style="left:461px;width:93px">J</div>
<div class="ch" style="left:555px;width:93px">I</div>
<div class="ch" style="left:649px;width:93px">H</div>
<div class="ch" style="left:743px;width:93px">G</div>
<div class="ch" style="left:837px;width:93px">F</div>
<div class="ch" style="left:931px;width:93px">E</div>
<div class="ch" style="left:1025px;width:93px">D</div>
<div class="ch" style="left:1119px;width:93px">C</div>
<div class="ch" style="left:1213px;width:301px">B</div>
<div class="ch sel" style="left:1515px;width:93px">A</div>
<div class="hs" style="left:84px"></div>
<div class="hs" style="left:178px"></div>
<div class="hs" style="left:272px"></div>
<div class="hs" style="left:366px"></div>
<div class="hs" style="left:460px"></div>
<div class="hs" style="left:554px"></div>
<div class="hs" style="left:648px"></div>
<div class="hs" style="left:742px"></div>
<div class="hs" style="left:836px"></div>
<div class="hs" style="left:930px"></div>
<div class="hs" style="left:1024px"></div>
<div class="hs" style="left:1118px"></div>
<div class="hs" style="left:1212px"></div>
<div class="hs" style="left:1514px"></div><div class="hs" style="left:1608px"></div>
<div class="vl" style="left:84px"></div>
<div class="vl" style="left:178px"></div>
<div class="vl" style="left:272px"></div>
<div class="vl" style="left:366px"></div>
<div class="vl" style="left:460px"></div>
<div class="vl" style="left:554px"></div>
<div class="vl" style="left:648px"></div>
<div class="vl" style="left:742px"></div>
<div class="vl" style="left:836px"></div>
<div class="vl" style="left:930px"></div>
<div class="vl" style="left:1024px"></div>
<div class="vl" style="left:1118px"></div>
<div class="hl" style="top:250px"></div>
<div class="hl" style="top:275px"></div>
<div class="hl" style="top:300px"></div>
<div class="hl" style="top:325px"></div>
<div class="hl" style="top:350px"></div>
<div class="hl" style="top:375px"></div>
<div class="hl" style="top:400px"></div>
<div class="hl" style="top:425px"></div>
<div class="hl" style="top:450px"></div>
<div class="hl" style="top:475px"></div>
<div class="hl" style="top:500px"></div>
<div class="hl" style="top:525px"></div>
<div class="hl" style="top:550px"></div>
<div class="hl" style="top:575px"></div>
<div class="hl" style="top:600px"></div>
<div class="hl" style="top:625px"></div>
<div class="hl" style="top:650px"></div>
<div class="hl" style="top:675px"></div>
<div class="hl" style="top:700px"></div>
<div class="hl" style="top:725px"></div>
<div class="hl" style="top:750px"></div>
<div class="hl" style="top:775px"></div>
<div class="hl" style="top:800px"></div>
<div class="hl" style="top:825px"></div>
<div class="hl" style="top:850px"></div>
<div class="hl" style="top:875px"></div>
<div class="hl" style="top:900px"></div>
<div class="hl" style="top:925px"></div>
<div class="hl" style="top:950px"></div>
<div class="hl" style="top:975px"></div>
<div class="cc" style="top:225px">12487</div>
<div class="cb" style="top:225px"><u>#10966816797</u></div>
<div class="ca act" style="top:226px">1</div>
<div class="rh" style="top:226px">1</div>
<div class="cc" style="top:250px">13327</div>
<div class="cb" style="top:250px"><u>#10077619355</u></div>
<div class="ca" style="top:251px">2</div>
<div class="rh" style="top:251px">2</div>
<div class="cc" style="top:275px">13313</div>
<div class="cb" style="top:275px"><u>#10990315148</u></div>
<div class="ca" style="top:276px">3</div>
<div class="rh" style="top:276px">3</div>
<div class="cc" style="top:300px">13313</div>
<div class="cb" style="top:300px"><u>#10258073072</u></div>
<div class="ca" style="top:301px">4</div>
<div class="rh" style="top:301px">4</div>
<div class="cc" style="top:325px">12661</div>
<div class="cb" style="top:325px"><u>#10257772498</u></div>
<div class="ca" style="top:326px">5</div>
<div class="rh" style="top:326px">5</div>
<div class="cc" style="top:350px">12477</div>
<div class="cb" style="top:350px"><u>#10083001592</u></div>
<div class="ca" style="top:351px">6</div>
<div class="rh" style="top:351px">6</div>
<div class="cc" style="top:375px">13313</div>
<div class="cb" style="top:375px"><u>#10185867831</u></div>
<div class="ca" style="top:376px">7</div>
<div class="rh" style="top:376px">7</div>
<div class="cc" style="top:400px">12487</div>
<div class="cb" style="top:400px"><u>#10916503397</u></div>
<div class="ca" style="top:401px">8</div>
<div class="rh" style="top:401px">8</div>
<div class="cc" style="top:425px">13313</div>
<div class="cb" style="top:425px"><u>#10423887744</u></div>
<div class="ca" style="top:426px">9</div>
<div class="rh" style="top:426px">9</div>
<div class="cc" style="top:450px">13313</div>
<div class="cb" style="top:450px"><u>#10875146329</u></div>
<div class="ca" style="top:451px">10</div>
<div class="rh" style="top:451px">10</div>
<div class="cc" style="top:475px">12842</div>
<div class="cb" style="top:475px"><u>#10129896765</u></div>
<div class="ca" style="top:476px">11</div>
<div class="rh" style="top:476px">11</div>
<div class="cc" style="top:500px">12842</div>
<div class="cb" style="top:500px"><u>#10524202446</u></div>
<div class="ca" style="top:501px">12</div>
<div class="rh" style="top:501px">12</div>
<div class="cc" style="top:525px">13323</div>
<div class="cb" style="top:525px"><u>#10803604016</u></div>
<div class="ca" style="top:526px">13</div>
<div class="rh" style="top:526px">13</div>
<div class="cc" style="top:550px">13323</div>
<div class="cb" style="top:550px"><u>#10719151944</u></div>
<div class="ca" style="top:551px">14</div>
<div class="rh" style="top:551px">14</div>
<div class="cc" style="top:575px">12477</div>
<div class="cb" style="top:575px"><u>#10211319011</u></div>
<div class="ca" style="top:576px">15</div>
<div class="rh" style="top:576px">15</div>
<div class="cc" style="top:600px">12477</div>
<div class="cb" style="top:600px"><u>#10057051280</u></div>
<div class="ca" style="top:601px">16</div>
<div class="rh" style="top:601px">16</div>
<div class="cc" style="top:625px">13323</div>
<div class="cb" style="top:625px"><u>#10014128220</u></div>
<div class="ca" style="top:626px">17</div>
<div class="rh" style="top:626px">17</div>
<div class="cc" style="top:650px">13323</div>
<div class="cb" style="top:650px"><u>#10457436589</u></div>
<div class="ca" style="top:651px">18</div>
<div class="rh" style="top:651px">18</div>
<div class="cc" style="top:675px">13323</div>
<div class="cb" style="top:675px"><u>#10279914617</u></div>
<div class="ca" style="top:676px">19</div>
<div class="rh" style="top:676px">19</div>
<div class="cc" style="top:700px">12487</div>
<div class="cb" style="top:700px"><u>#10066555227</u></div>
<div class="ca" style="top:701px">20</div>
<div class="rh" style="top:701px">20</div>
<div class="cc" style="top:725px">12477</div>
<div class="cb" style="top:725px"><u>#10660311776</u></div>
<div class="ca" style="top:726px">21</div>
<div class="rh" style="top:726px">21</div>
<div class="cc" style="top:750px">12477</div>
<div class="cb" style="top:750px"><u>#10916827358</u></div>
<div class="ca" style="top:751px">22</div>
<div class="rh" style="top:751px">22</div>
<div class="cc" style="top:775px">12477</div>
<div class="cb" style="top:775px"><u>#10956057294</u></div>
<div class="ca" style="top:776px">23</div>
<div class="rh" style="top:776px">23</div>
<div class="cc" style="top:800px">12842</div>
<div class="cb" style="top:800px"><u>#10104821987</u></div>
<div class="ca" style="top:801px">24</div>
<div class="rh" style="top:801px">24</div>
<div class="cc" style="top:825px">13313</div>
<div class="cb" style="top:825px"><u>#10101474557</u></div>
<div class="ca" style="top:826px">25</div>
<div class="rh" style="top:826px">25</div>
<div class="cc" style="top:850px">13327</div>
<div class="cb" style="top:850px"><u>#10422041478</u></div>
<div class="ca" style="top:851px">26</div>
<div class="rh" style="top:851px">26</div>
<div class="cc" style="top:875px">13327</div>
<div class="cb" style="top:875px"><u>#10928904500</u></div>
<div class="ca" style="top:876px">27</div>
<div class="rh" style="top:876px">27</div>
<div class="cc" style="top:900px">12842</div>
<div class="cb" style="top:900px"><u>#10276394467</u></div>
<div class="ca" style="top:901px">28</div>
<div class="rh" style="top:901px">28</div>
<div class="cc" style="top:925px">13313</div>
<div class="cb" style="top:925px"><u>#10614891683</u></div>
<div class="ca" style="top:926px">29</div>
<div class="rh" style="top:926px">29</div>
<div class="cc" style="top:950px">12842</div>
<div class="cb" style="top:950px"><u>#10386354082</u></div>
<div class="ca" style="top:951px">30</div>
<div class="rh" style="top:951px">30</div>
<div class="cc" style="top:975px">12477</div>
<div class="cb" style="top:975px"><u>#10237541564</u></div>
<div class="ca" style="top:976px">31</div>
<div class="rh" style="top:976px">31</div>
<div class="bl" style="left:1118px;top:250px;width:395px;height:1px"></div>
<div class="bl" style="left:1516px;top:250px;width:91px;height:1px"></div>
<div class="bl" style="left:1118px;top:275px;width:395px;height:1px"></div>
<div class="bl" style="left:1516px;top:275px;width:91px;height:1px"></div>
<div class="bl" style="left:1118px;top:300px;width:395px;height:1px"></div>
<div class="bl" style="left:1516px;top:300px;width:91px;height:1px"></div>
<div class="bl" style="left:1118px;top:325px;width:395px;height:1px"></div>
<div class="bl" style="left:1516px;top:325px;width:91px;height:1px"></div>
<div class="bl" style="left:1118px;top:350px;width:395px;height:1px"></div>
<div class="bl" style="left:1516px;top:350px;width:91px;height:1px"></div>
<div class="bl" style="left:1118px;top:375px;width:395px;height:1px"></div>
<div class="bl" style="left:1516px;top:375px;width:91px;height:1px"></div>
<div class="bl" style="left:1118px;top:400px;width:395px;height:1px"></div>
<div class="bl" style="left:1516px;top:400px;width:91px;height:1px"></div>
<div class="bl" style="left:1118px;top:425px;width:395px;height:1px"></div>
<div class="bl" style="left:1516px;top:425px;width:91px;height:1px"></div>
<div class="bl" style="left:1118px;top:450px;width:395px;height:1px"></div>
<div class="bl" style="left:1516px;top:450px;width:91px;height:1px"></div>
<div class="bl" style="left:1118px;top:475px;width:395px;height:1px"></div>
<div class="bl" style="left:1516px;top:475px;width:91px;height:1px"></div>
<div class="bl" style="left:1118px;top:500px;width:395px;height:1px"></div>
<div class="bl" style="left:1516px;top:500px;width:91px;height:1px"></div>
<div class="bl" style="left:1118px;top:525px;width:395px;height:1px"></div>
<div class="bl" style="left:1516px;top:525px;width:91px;height:1px"></div>
<div class="bl" style="left:1118px;top:550px;width:395px;height:1px"></div>
<div class="bl" style="left:1516px;top:550px;width:91px;height:1px"></div>
<div class="bl" style="left:1118px;top:575px;width:395px;height:1px"></div>
<div class="bl" style="left:1516px;top:575px;width:91px;height:1px"></div>
<div class="bl" style="left:1118px;top:600px;width:395px;height:1px"></div>
<div class="bl" style="left:1516px;top:600px;width:91px;height:1px"></div>
<div class="bl" style="left:1118px;top:625px;width:395px;height:1px"></div>
<div class="bl" style="left:1516px;top:625px;width:91px;height:1px"></div>
<div class="bl" style="left:1118px;top:650px;width:395px;height:1px"></div>
<div class="bl" style="left:1516px;top:650px;width:91px;height:1px"></div>
<div class="bl" style="left:1118px;top:675px;width:395px;height:1px"></div>
<div class="bl" style="left:1516px;top:675px;width:91px;height:1px"></div>
<div class="bl" style="left:1118px;top:700px;width:395px;height:1px"></div>
<div class="bl" style="left:1516px;top:700px;width:91px;height:1px"></div>
<div class="bl" style="left:1118px;top:725px;width:395px;height:1px"></div>
<div class="bl" style="left:1516px;top:725px;width:91px;height:1px"></div>
<div class="bl" style="left:1118px;top:750px;width:395px;height:1px"></div>
<div class="bl" style="left:1516px;top:750px;width:91px;height:1px"></div>
<div class="bl" style="left:1118px;top:775px;width:395px;height:1px"></div>
<div class="bl" style="left:1516px;top:775px;width:91px;height:1px"></div>
<div class="bl" style="left:1118px;top:800px;width:395px;height:1px"></div>
<div class="bl" style="left:1516px;top:800px;width:91px;height:1px"></div>
<div class="bl" style="left:1118px;top:825px;width:395px;height:1px"></div>
<div class="bl" style="left:1516px;top:825px;width:91px;height:1px"></div>
<div class="bl" style="left:1118px;top:850px;width:395px;height:1px"></div>
<div class="bl" style="left:1516px;top:850px;width:91px;height:1px"></div>
<div class="bl" style="left:1118px;top:875px;width:395px;height:1px"></div>
<div class="bl" style="left:1516px;top:875px;width:91px;height:1px"></div>
<div class="bl" style="left:1118px;top:900px;width:395px;height:1px"></div>
<div class="bl" style="left:1516px;top:900px;width:91px;height:1px"></div>
<div class="bl" style="left:1118px;top:925px;width:395px;height:1px"></div>
<div class="bl" style="left:1516px;top:925px;width:91px;height:1px"></div>
<div class="bl" style="left:1118px;top:950px;width:395px;height:1px"></div>
<div class="bl" style="left:1516px;top:950px;width:91px;height:1px"></div>
<div class="bl" style="left:1118px;top:975px;width:395px;height:1px"></div>
<div class="bl" style="left:1516px;top:975px;width:91px;height:1px"></div>
<div class="bl" style="left:1118px;top:226px;width:1px;height:756px"></div>
<div class="bl" style="left:1212px;top:226px;width:1px;height:756px"></div>
<div class="gr" style="left:1513px;top:224px;width:2px;height:758px"></div>
<div class="gr" style="left:1608px;top:224px;width:2px;height:758px"></div>
<div class="gr" style="left:1513px;top:224px;width:97px;height:2px"></div>
<div class="a" style="left:1610px;top:225px;width:38px;height:1px;background:#c8c8c8"></div>
<div class="a" style="left:1648px;top:204px;width:1px;height:806px;background:#4a4a4a"></div>
<svg style="left:1611px;top:205px" width="18" height="18" viewBox="0 0 18 18"><path d="M1 1 L1 17 L17 17 Z" fill="#dcdcdc"/></svg>
<!-- vertical scrollbar (left, RTL sheet) -->
<div class="a" style="left:4px;top:205px;width:13px;height:13px;background:#d2d2d2"></div>
<svg style="left:4px;top:205px" width="13" height="13" viewBox="0 0 13 13"><path d="M3 8.5 L6.5 4.5 L10 8.5 Z" fill="#1a1a1a"/></svg>
<div class="a" style="left:3px;top:378px;width:15px;height:591px;background:#444"></div>
<div class="a" style="left:4px;top:220px;width:13px;height:158px;background:#d2d2d2"></div>
<div class="a" style="left:4px;top:969px;width:13px;height:13px;background:#d2d2d2"></div>
<svg style="left:4px;top:969px" width="13" height="13" viewBox="0 0 13 13"><path d="M3 4.5 L6.5 8.5 L10 4.5 Z" fill="#1a1a1a"/></svg>
</div>
<!-- document recovery panel -->
<div id="panel" class="a" style="left:1649px;top:202px;width:271px;height:808px;background:#666">
<div class="t r" style="right:13px;top:14px;font-size:22px;transform-origin:100% 50%;transform:scaleX(0.981);line-height:30px;height:30px;color:#f2f2f2">استرداد المستند</div>
<div class="t r" style="right:17px;top:57.5px;font-size:12px;color:#f0f0f0">لقد استرد Excel الملفات التالية. احفظ الملفات</div>
<div class="t r" style="right:17px;top:72.5px;font-size:12px;transform-origin:100% 50%;transform:scaleX(1.0206);color:#f0f0f0">التي تريد الاحتفاظ بها.</div>
<div class="a" style="left:14px;top:112px;width:242px;height:58px;background:#444"></div>
<svg style="left:209px;top:123px" width="34" height="38" viewBox="0 0 34 38"><path d="M5.5 0.5 H25 L33.5 9 V36.5 H5.5 Z" fill="#e8e8e8" stroke="#c9c9c9" stroke-width="1"/><path d="M25 0.5 V9 H33.5 Z" fill="#cfcfcf"/><rect x="21.5" y="14.5" width="3.5" height="3" fill="#21a366"/><rect x="21.5" y="19" width="3.5" height="3" fill="#21a366"/><rect x="21.5" y="23.5" width="3.5" height="3" fill="#21a366"/><path d="M26.5 14 V27 M26.5 20.5 H30 M30 14 V27" stroke="#21a366" stroke-width="1.5" fill="none"/><rect x="0" y="8.5" width="20" height="19" rx="2" fill="#107c41"/><path d="M5.5 12.5 L14.5 23.5 M14.5 12.5 L5.5 23.5" stroke="#fff" stroke-width="2.6" fill="none"/></svg>
<div class="t r" style="right:73px;top:117.5px;font-size:12px;transform-origin:100% 50%;transform:scaleX(1.0527);color:#f5f5f5;font-weight:bold;"><span dir="rtl">المصنف1</span> ...<span dir="ltr">(version 2).xls</span></div>
<div class="t r" style="right:73px;top:135px;font-size:11px;transform-origin:100% 50%;transform:scaleX(0.9904);color:#f0f0f0">الإصدار الذي تم إنشاؤه من عملي...</div>
<div class="t r" style="right:73px;top:152px;font-size:11px;transform-origin:100% 50%;transform:scaleX(1.034);color:#f0f0f0">12/02/2026 03:11 م</div>
<svg style="left:209px;top:186px" width="34" height="38" viewBox="0 0 34 38"><path d="M5.5 0.5 H25 L33.5 9 V36.5 H5.5 Z" fill="#e8e8e8" stroke="#c9c9c9" stroke-width="1"/><path d="M25 0.5 V9 H33.5 Z" fill="#cfcfcf"/><rect x="21.5" y="14.5" width="3.5" height="3" fill="#21a366"/><rect x="21.5" y="19" width="3.5" height="3" fill="#21a366"/><rect x="21.5" y="23.5" width="3.5" height="3" fill="#21a366"/><path d="M26.5 14 V27 M26.5 20.5 H30 M30 14 V27" stroke="#21a366" stroke-width="1.5" fill="none"/><rect x="0" y="8.5" width="20" height="19" rx="2" fill="#107c41"/><path d="M5.5 12.5 L14.5 23.5 M14.5 12.5 L5.5 23.5" stroke="#fff" stroke-width="2.6" fill="none"/></svg>
<div class="t r" style="right:73px;top:180.5px;font-size:11px;transform-origin:100% 50%;transform:scaleX(1.0389);color:#f5f5f5;"><span dir="rtl">المصنف1</span> <span dir="ltr">(version 1).xlsb</span>&nbsp; [ت...</div>
<div class="t r" style="right:73px;top:198px;font-size:11px;transform-origin:100% 50%;transform:scaleX(0.9904);color:#f0f0f0">الإصدار الذي تم إنشاؤه من عملي...</div>
<div class="t r" style="right:73px;top:215px;font-size:11px;transform-origin:100% 50%;transform:scaleX(1.034);color:#f0f0f0">31/01/2026 11:39 م</div>
<svg style="left:209px;top:249px" width="34" height="38" viewBox="0 0 34 38"><path d="M5.5 0.5 H25 L33.5 9 V36.5 H5.5 Z" fill="#e8e8e8" stroke="#c9c9c9" stroke-width="1"/><path d="M25 0.5 V9 H33.5 Z" fill="#cfcfcf"/><rect x="21.5" y="14.5" width="3.5" height="3" fill="#21a366"/><rect x="21.5" y="19" width="3.5" height="3" fill="#21a366"/><rect x="21.5" y="23.5" width="3.5" height="3" fill="#21a366"/><path d="M26.5 14 V27 M26.5 20.5 H30 M30 14 V27" stroke="#21a366" stroke-width="1.5" fill="none"/><rect x="0" y="8.5" width="20" height="19" rx="2" fill="#107c41"/><path d="M5.5 12.5 L14.5 23.5 M14.5 12.5 L5.5 23.5" stroke="#fff" stroke-width="2.6" fill="none"/></svg>
<div class="t r" style="right:73px;top:243.5px;font-size:12px;transform-origin:100% 50%;transform:scaleX(0.9593);color:#f5f5f5;">تقرير التدقيق لمختبرات الفح...</div>
<div class="t r" style="right:73px;top:261px;font-size:11px;transform-origin:100% 50%;transform:scaleX(0.9904);color:#f0f0f0">الإصدار الذي تم إنشاؤه من عملي...</div>
<div class="t r" style="right:73px;top:278px;font-size:11px;transform-origin:100% 50%;transform:scaleX(1.034);color:#f0f0f0">03/02/2026 08:43 م</div>
<svg style="left:209px;top:312px" width="34" height="38" viewBox="0 0 34 38"><path d="M5.5 0.5 H25 L33.5 9 V36.5 H5.5 Z" fill="#e8e8e8" stroke="#c9c9c9" stroke-width="1"/><path d="M25 0.5 V9 H33.5 Z" fill="#cfcfcf"/><path d="M21.5 15.5 H30 M21.5 19.5 H30 M21.5 23.5 H30" stroke="#107c41" stroke-width="1.8" fill="none"/><path d="M25.5 13 V26" stroke="#e8e8e8" stroke-width="1"/><rect x="0" y="8.5" width="20" height="19" rx="2" fill="#107c41"/><path d="M5.5 12.5 L14.5 23.5 M14.5 12.5 L5.5 23.5" stroke="#fff" stroke-width="2.6" fill="none"/></svg>
<div class="t r" style="right:73px;top:306.5px;font-size:12px;transform-origin:100% 50%;transform:scaleX(0.9593);color:#f5f5f5;">تقرير التدقيق لمختبرات الفح...</div>
<div class="t r" style="right:73px;top:324px;font-size:11px;transform-origin:100% 50%;transform:scaleX(1.0101);color:#f0f0f0">الإصدار الذي تم إنشاؤه عند آخر...</div>
<div class="t r" style="right:73px;top:341px;font-size:11px;transform-origin:100% 50%;transform:scaleX(1.034);color:#f0f0f0">31/01/2026 11:31 م</div>
<svg style="left:242px;top:755px" width="16" height="16" viewBox="0 0 16 16"><circle cx="8" cy="8" r="8" fill="#2e62cc"/><text x="8" y="12" font-size="11" text-anchor="middle" font-family="Liberation Sans" fill="#fff" style="font-weight:bold">؟</text></svg>
<div class="t r" style="right:37.2px;top:755px;font-size:12px;transform-origin:100% 50%;transform:scaleX(1.0317);color:#b4d7f7;text-decoration:underline;text-underline-offset:2px">ما هو الملف الذي أريد حفظه؟</div>
<div class="a" style="left:12px;top:772px;width:46px;height:22px;background:#d0d0d0;border:1px solid #8a8a8a"></div>
<div class="t r c" style="left:35.2px;top:774.5px;font-size:11px;transform:translateX(-50%) scaleX(1.144);color:#262626">إغلاق</div>
</div>
<!-- bottom: sheet tabs + scrollbar + status bar -->
<div id="bottom" class="a" style="left:0;top:982px;width:1649px;height:28px;background:#666">
<!-- horizontal scrollbar -->
<div class="a" style="left:22px;top:8px;width:620px;height:14px;background:#d2d2d2"></div>
<div class="a" style="left:36px;top:8px;width:43px;height:14px;background:#474747"></div>
<svg style="left:22px;top:8px" width="14" height="14" viewBox="0 0 14 14"><path d="M8.5 3.5 L4.5 7 L8.5 10.5 Z" fill="#1a1a1a"/></svg>
<div class="a" style="left:627px;top:8px;width:1px;height:14px;background:#666"></div>
<svg style="left:628px;top:8px" width="14" height="14" viewBox="0 0 14 14"><path d="M5.5 3.5 L9.5 7 L5.5 10.5 Z" fill="#1a1a1a"/></svg>
<svg style="left:656px;top:9px" width="3" height="11" viewBox="0 0 3 11"><rect x="0.5" y="0" width="2" height="2" fill="#f0f0f0"/><rect x="0.5" y="4.5" width="2" height="2" fill="#f0f0f0"/><rect x="0.5" y="9" width="2" height="2" fill="#f0f0f0"/></svg>
<!-- new sheet -->
<svg style="left:1288px;top:5px" width="18" height="18" viewBox="0 0 18 18"><circle cx="9" cy="9" r="7.6" stroke="#fff" stroke-width="1.4" fill="none"/><path d="M9 4.8 V13.2 M4.8 9 H13.2" stroke="#fff" stroke-width="1.6"/></svg>
<!-- tabs -->
<div class="a" style="left:1340px;top:0;width:52px;height:24.5px;background:#fff;border-bottom:2px solid #217346"></div>
<div class="t r c" style="left:1367.3px;top:4.5px;font-size:11px;transform:translateX(-50%) scaleX(0.8515);color:#217346;font-weight:bold">ورقة4</div>
<div class="t r c w" style="left:1420.1px;top:4.5px;font-size:11px;transform:translateX(-50%) scaleX(0.9926);">ورقة3</div>
<div class="t r c w" style="left:1472px;top:4.5px;font-size:11px;transform:translateX(-50%) scaleX(1.0259);">ورقة2</div>
<div class="t r c w" style="left:1524.4px;top:4.5px;font-size:11px;transform:translateX(-50%) scaleX(0.9667);">ورقة1</div>
<div class="a" style="left:1443px;top:4px;width:1px;height:20px;background:#8e8e8e"></div>
<div class="a" style="left:1495px;top:4px;width:1px;height:20px;background:#8e8e8e"></div>
<div class="a" style="left:1547px;top:4px;width:1px;height:20px;background:#8e8e8e"></div>
<svg style="left:1587px;top:9.5px" width="6" height="9" viewBox="0 0 6 9"><path d="M5.5 0.5 L0.5 4.5 L5.5 8.5 Z" fill="#9a9a9a"/></svg>
<svg style="left:1615px;top:9.5px" width="6" height="9" viewBox="0 0 6 9"><path d="M0.5 0.5 L5.5 4.5 L0.5 8.5 Z" fill="#9a9a9a"/></svg>
<div class="a" style="left:1648px;top:0;width:1px;height:28px;background:#4a4a4a"></div>
</div>
<!-- status bar -->
<div id="status" class="a" style="left:0;top:1010px;width:1920px;height:22px;background:#666;border-top:1px solid #4f4f4f">
<div class="t w" style="left:10.5px;top:1.5px;font-size:11px;transform-origin:0 50%;transform:scaleX(1.0107);">130%</div>
<svg style="left:50px;top:6px" width="9" height="9" viewBox="0 0 9 9"><path d="M4.5 0 V9 M0 4.5 H9" stroke="#fff" stroke-width="1.1"/></svg>
<div class="a" style="left:63px;top:10px;width:100px;height:1px;background:#fff"></div>
<div class="a" style="left:113px;top:7px;width:1px;height:7px;background:#fff"></div>
<div class="a" style="left:105px;top:5px;width:5px;height:11px;background:#fff"></div>
<svg style="left:168px;top:10px" width="9" height="2" viewBox="0 0 9 2"><path d="M0 0.6 H8.5" stroke="#fff" stroke-width="1.1"/></svg>
<!-- view buttons -->
<svg style="left:195px;top:2.5px" width="14" height="13" viewBox="0 0 14 13"><rect x="0.5" y="0.5" width="13" height="12" stroke="#fff" fill="none"/><rect x="1" y="1" width="4" height="6" fill="#fff"/><rect x="6" y="1" width="2.6" height="6" fill="#fff"/></svg>
<svg style="left:235px;top:2.5px" width="14" height="13" viewBox="0 0 14 13"><rect x="0.5" y="0.5" width="13" height="12" stroke="#fff" fill="none"/><rect x="3.5" y="3" width="7" height="7" stroke="#fff" fill="none"/><path d="M5 4.8 H9 M5 6.5 H9 M5 8.2 H9" stroke="#fff" stroke-width="0.9"/></svg>
<div class="a" style="left:262px;top:0;width:40px;height:21px;background:#444"></div>
<svg style="left:275px;top:2.5px" width="14" height="13" viewBox="0 0 14 13"><rect x="0.5" y="0.5" width="13" height="12" stroke="#fff" fill="none"/><path d="M0.5 4.5 H13.5 M0.5 8.5 H13.5 M4.8 0.5 V12.5 M9.2 0.5 V12.5" stroke="#fff" stroke-width="1.1" fill="none"/></svg>
<div class="t w r" style="right:1536.5px;top:1.5px;font-size:11px;transform-origin:100% 50%;transform:scaleX(1.0048);">مجموع: 9870</div>
<div class="t w r" style="right:1477.1px;top:1.5px;font-size:11px;transform-origin:100% 50%;transform:scaleX(1.0167);">عدد: 140</div>
<div class="t w r" style="right:1398.1px;top:1.5px;font-size:11px;transform-origin:100% 50%;transform:scaleX(1.0295);">متوسط: 70.5</div>
<div class="t w r" style="right:72.6px;top:1.5px;font-size:11px;transform-origin:100% 50%;transform:scaleX(0.9548);font-weight:bold">إمكانية الوصول لذوي الاحتياجات الخاصة: اطلع على توصيات</div>
<svg style="left:1852px;top:2px" width="17" height="17" viewBox="0 0 17 17"><path d="M12.5 4.5 A6 6 0 1 0 13.8 11" stroke="#fff" stroke-width="1" fill="none" stroke-dasharray="2 1.4"/><circle cx="7.5" cy="4.2" r="1.3" fill="#fff"/><path d="M3.5 6.8 H11.5 M7.5 6.8 V10 M7.5 10 L5 14 M7.5 10 L10 14" stroke="#fff" stroke-width="1.1" fill="none"/><path d="M11 10.5 L16 15.5 M16 10.5 L11 15.5" stroke="#fff" stroke-width="1.3"/></svg>
<div class="t w r" style="right:11.5px;top:1.5px;font-size:11px;transform-origin:100% 50%;transform:scaleX(1.0273);">جاهز</div>
</div>
<!-- faint watermark over status bar -->
<div class="a" style="left:0;top:1011px;width:1920px;height:21px;overflow:hidden"><svg style="left:840px;top:-3px" width="240" height="56" viewBox="840 1008 240 56"><g stroke="rgba(170,170,170,0.34)" stroke-width="7" fill="none" stroke-linejoin="round"><path d="M848.5 1028 V1042 Q848.5 1055 862 1055 H880 Q893.5 1055 893.5 1042 V1028"/><path d="M906.5 1013 V1055"/><path d="M921 1055 H981.5 V1028 M939.5 1028 V1055 M958.5 1028 V1055"/><path d="M1018 1015.5 H995.5 V1030"/><circle cx="1006" cy="1041" r="13"/><path d="M1040 1058 V1044 Q1040 1027 1056 1027 Q1072 1027 1072 1044 V1058"/></g><g fill="rgba(170,170,170,0.34)"><path d="M867 1014 L872 1019 L867 1024 L862 1019 Z"/><path d="M882 1012 L887 1017 L882 1022 L877 1017 Z"/><path d="M1053 1012 L1058 1017 L1053 1022 L1048 1017 Z"/></g></svg></div>
<!-- windows taskbar -->
<div id="taskbar" class="a" style="left:0;top:1032px;width:1920px;height:48px;background:#e1e1e1;overflow:hidden">
<svg style="left:840px;top:-24px" width="240" height="56" viewBox="840 1008 240 56"><g stroke="rgba(170,170,170,0.17)" stroke-width="7" fill="none" stroke-linejoin="round"><path d="M848.5 1028 V1042 Q848.5 1055 862 1055 H880 Q893.5 1055 893.5 1042 V1028"/><path d="M906.5 1013 V1055"/><path d="M921 1055 H981.5 V1028 M939.5 1028 V1055 M958.5 1028 V1055"/><path d="M1018 1015.5 H995.5 V1030"/><circle cx="1006" cy="1041" r="13"/><path d="M1040 1058 V1044 Q1040 1027 1056 1027 Q1072 1027 1072 1044 V1058"/></g><g fill="rgba(170,170,170,0.17)"><path d="M867 1014 L872 1019 L867 1024 L862 1019 Z"/><path d="M882 1012 L887 1017 L882 1022 L877 1017 Z"/><path d="M1053 1012 L1058 1017 L1053 1022 L1048 1017 Z"/></g></svg>
<div class="t" style="left:19.5px;top:7.5px;font-size:12px;transform-origin:0 50%;transform:scaleX(0.9571);color:#1f1f1f;direction:rtl">09:37 ص</div>
<div class="t" style="left:19px;top:23.5px;font-size:12px;transform-origin:0 50%;transform:scaleX(0.9774);color:#1f1f1f">2026/16/02</div>
<svg style="left:98.5px;top:17.5px" width="15" height="14" viewBox="0 0 15 14"><path d="M0.8 4.5 H3.5 L7.2 1 V11 L3.5 8 H0.8 Z" stroke="#1f1f1f" stroke-width="1.1" fill="none" stroke-linejoin="round"/><circle cx="10.5" cy="9.5" r="4" fill="#1f1f1f"/><path d="M8.9 7.9 L12.1 11.1 M12.1 7.9 L8.9 11.1" stroke="#e3e3e3" stroke-width="1.1"/></svg>
<svg style="left:120.5px;top:17.5px" width="17" height="12" viewBox="0 0 17 12"><path d="M0.8 4.2 Q8.5 -2.6 16.2 4.2" stroke="#1f1f1f" stroke-width="1.3" fill="none"/><path d="M3.2 6.8 Q8.5 2 13.8 6.8" stroke="#1f1f1f" stroke-width="1.3" fill="none"/><path d="M5.6 9.2 Q8.5 6.6 11.4 9.2" stroke="#1f1f1f" stroke-width="1.3" fill="none"/><circle cx="8.5" cy="10.8" r="1.1" fill="#1f1f1f"/></svg>
<div class="t" style="left:155px;top:16.5px;font-size:11px;transform-origin:0 50%;transform:scaleX(0.9667);color:#1f1f1f">ENG</div>
<svg style="left:196px;top:17.5px" width="17" height="14" viewBox="0 0 17 14"><path d="M3.5 10.5 Q0.3 10.5 0.3 7.6 Q0.3 5 3 4.8 Q3.8 1.5 7 1.5 Q9.4 1.5 10.6 3.6 Q13.8 3.2 14 6.5 Q14.2 10.5 11 10.5 Z" fill="#1976d8"/><circle cx="12" cy="9.5" r="4.2" fill="#fff"/><path d="M9.6 9 A2.5 2.5 0 0 1 14.2 8.2 M14.4 10 A2.5 2.5 0 0 1 9.8 10.8" stroke="#1976d8" stroke-width="1.1" fill="none"/><path d="M14.6 6.6 V8.6 H12.6 Z M9.4 12.4 V10.4 H11.4 Z" fill="#1976d8"/></svg>
<svg style="left:231.5px;top:20.5px" width="11" height="7" viewBox="0 0 11 7"><path d="M0.7 6 L5.5 1.2 L10.3 6" stroke="#1f1f1f" stroke-width="1.4" fill="none"/></svg>
<div class="a" style="left:588px;top:4px;width:38px;height:40px;border-radius:4px;background:#f3f3f3"></div>
<svg style="left:594px;top:12px" width="26" height="24" viewBox="0 0 26 24"><rect x="8" y="0.5" width="18" height="23" rx="1.5" fill="#21a366"/><rect x="17" y="0.5" width="9" height="6" fill="#33c481"/><rect x="8" y="6.5" width="9" height="6" fill="#107c41"/><rect x="8" y="12.5" width="18" height="11" fill="#185c37"/><rect x="17" y="12.5" width="9" height="5.5" fill="#107c41"/><rect x="0" y="5" width="14" height="14" rx="1.5" fill="#107c41"/><path d="M4 8.5 L10 15.5 M10 8.5 L4 15.5" stroke="#fff" stroke-width="1.9"/></svg>
<div class="a" style="left:599px;top:39px;width:16px;height:3px;border-radius:1.5px;background:#2f7fe0"></div>
<svg style="left:637.6px;top:13px" width="24" height="24" viewBox="0 0 24 24"><circle cx="12" cy="12" r="11" fill="#fbc116"/><path d="M12 12 L2.47 6.5 A11 11 0 0 1 21.53 6.5 Z" fill="#e33b2e"/><path d="M12 12 L2.47 6.5 A11 11 0 0 0 12 23 L17 14.9 Z" fill="#2ba24c"/><path d="M12 12 L21.53 6.5 H12 Z" fill="#e33b2e"/><circle cx="12" cy="12" r="5.2" fill="#fff"/><circle cx="12" cy="12" r="4.1" fill="#1a73e8"/></svg>
<div class="a" style="left:633.6px;top:8px;width:16px;height:16px;border-radius:8px;background:#c62f2f;color:#fff;font-size:9px;line-height:16px;text-align:center;font-weight:bold">S</div>
<div class="a" style="left:650.6px;top:13px;width:11px;height:11px;border-radius:6px;background:#c62f2f;color:#fff;font-size:6px;line-height:11px;text-align:center">S</div>
<div class="a" style="left:646.6px;top:40px;width:6px;height:3px;border-radius:1.5px;background:#858585"></div>
<svg style="left:684.7px;top:12px" width="19" height="25" viewBox="0 0 19 25"><rect x="0.5" y="0.5" width="18" height="24" rx="2" fill="#767f88" stroke="#5b636b"/><rect x="2.5" y="2.5" width="14" height="5.5" fill="#3db4f2"/><g fill="#dfe3e6"><rect x="2.5" y="10" width="3.6" height="3.4"/><rect x="7.7" y="10" width="3.6" height="3.4"/><rect x="12.9" y="10" width="3.6" height="3.4"/><rect x="2.5" y="14.8" width="3.6" height="3.4"/><rect x="7.7" y="14.8" width="3.6" height="3.4"/><rect x="2.5" y="19.6" width="3.6" height="3.4"/><rect x="7.7" y="19.6" width="3.6" height="3.4"/></g><rect x="12.9" y="14.8" width="3.6" height="8.2" fill="#1a4b8c"/></svg>
<div class="a" style="left:691.2px;top:40px;width:6px;height:3px;border-radius:1.5px;background:#858585"></div>
<svg style="left:725.3px;top:12.5px" width="26" height="24" viewBox="0 0 26 24"><circle cx="14.5" cy="12" r="11.5" fill="#ed6c47"/><path d="M14.5 0.5 A11.5 11.5 0 0 1 26 12 H14.5 Z" fill="#ff8f6b"/><path d="M14.5 12 H26 A11.5 11.5 0 0 1 14.5 23.5 Z" fill="#d35230"/><rect x="0" y="5" width="14" height="14" rx="1.5" fill="#c43e1c"/><path d="M5 16 V8.3 H8 Q10.4 8.3 10.4 10.6 Q10.4 12.9 8 12.9 H5" stroke="#fff" stroke-width="1.8" fill="none"/></svg>
<div class="a" style="left:735.3px;top:40px;width:6px;height:3px;border-radius:1.5px;background:#858585"></div>
<svg style="left:770.9px;top:13px" width="24" height="24" viewBox="0 0 24 24"><circle cx="12" cy="12" r="11" fill="#fbc116"/><path d="M12 12 L2.47 6.5 A11 11 0 0 1 21.53 6.5 Z" fill="#e33b2e"/><path d="M12 12 L2.47 6.5 A11 11 0 0 0 12 23 L17 14.9 Z" fill="#2ba24c"/><path d="M12 12 L21.53 6.5 H12 Z" fill="#e33b2e"/><circle cx="12" cy="12" r="5.2" fill="#fff"/><circle cx="12" cy="12" r="4.1" fill="#1a73e8"/></svg>
<div class="a" style="left:766.9px;top:8px;width:16px;height:16px;border-radius:8px;background:#0d8a6a;color:#fff;font-size:9px;line-height:16px;text-align:center;font-weight:bold">M</div>
<div class="a" style="left:783.9px;top:13px;width:11px;height:11px;border-radius:6px;background:#0d8a6a;color:#fff;font-size:6px;line-height:11px;text-align:center">M</div>
<div class="a" style="left:779.9px;top:40px;width:6px;height:3px;border-radius:1.5px;background:#858585"></div>
<svg style="left:814.7px;top:12.5px" width="24" height="24" viewBox="0 0 24 24"><rect x="0" y="0" width="24" height="24" rx="3.5" fill="#3867d6"/><path d="M0 0 H24 V12 Q18 4 0 8 Z" fill="#2b57c4"/><path d="M24 10 V20.5 Q24 24 20.5 24 H12 Z" fill="#6a4bc0"/><circle cx="18.5" cy="5.5" r="2.2" fill="#fff"/><path d="M0 20 L10 9.5 L20 20.5 Q18 24 16 24 H3.5 Q0 24 0 20.5 Z" fill="#1c8fe8"/><path d="M4 24 L13 15 L20.5 22.5 Q19.5 24 18 24 Z" fill="#5fc0ff"/></svg>
<div class="a" style="left:823.7px;top:40px;width:6px;height:3px;border-radius:1.5px;background:#858585"></div>
<svg style="left:858.4px;top:12.5px" width="24" height="24" viewBox="0 0 24 24"><rect x="0" y="0" width="24" height="24" rx="4.5" fill="#c8362b"/><path d="M5 18.5 Q9.8 14.5 11.4 8.2 Q12 5 10.8 5 Q9.4 5.2 10.6 8.4 Q12.6 13 18 15 Q20 15.6 19.6 14.4 Q18.4 13.2 14.6 14 Q9.6 15 5.6 18.6 Q4.6 19.6 5 18.5 Z" stroke="#fff" stroke-width="1.3" fill="none"/></svg>
<div class="a" style="left:867.4px;top:40px;width:6px;height:3px;border-radius:1.5px;background:#858585"></div>
<svg style="left:902.2px;top:13px" width="24" height="24" viewBox="0 0 24 24"><circle cx="12" cy="12" r="11" fill="#fbc116"/><path d="M12 12 L2.47 6.5 A11 11 0 0 1 21.53 6.5 Z" fill="#e33b2e"/><path d="M12 12 L2.47 6.5 A11 11 0 0 0 12 23 L17 14.9 Z" fill="#2ba24c"/><path d="M12 12 L21.53 6.5 H12 Z" fill="#e33b2e"/><circle cx="12" cy="12" r="5.2" fill="#fff"/><circle cx="12" cy="12" r="4.1" fill="#1a73e8"/></svg>
<div class="a" style="left:898.2px;top:8px;width:16px;height:16px;border-radius:8px;background:#9aa3ad;color:#fff;font-size:9px;line-height:16px;text-align:center;font-weight:bold">P</div>
<div class="a" style="left:915.2px;top:13px;width:11px;height:11px;border-radius:6px;background:#9aa3ad;color:#fff;font-size:6px;line-height:11px;text-align:center">P</div>
<div class="a" style="left:911.2px;top:40px;width:6px;height:3px;border-radius:1.5px;background:#858585"></div>
<svg style="left:946.2px;top:12px" width="26" height="24" viewBox="0 0 26 24"><rect x="8" y="0.5" width="18" height="23" rx="1.5" fill="#2b7cd3"/><rect x="8" y="0.5" width="18" height="6" fill="#41a5ee"/><rect x="8" y="12.5" width="18" height="5.8" fill="#185abd"/><rect x="8" y="18.2" width="18" height="5.3" fill="#103f91"/><rect x="0" y="5" width="14" height="14" rx="1.5" fill="#185abd"/><path d="M2.8 8.5 L4.8 15.5 L7 10 L9.2 15.5 L11.2 8.5" stroke="#fff" stroke-width="1.5" fill="none"/></svg>
<div class="a" style="left:956.2px;top:40px;width:6px;height:3px;border-radius:1.5px;background:#858585"></div>
<svg style="left:989.5px;top:13.5px" width="26" height="22" viewBox="0 0 26 22"><path d="M0.5 2 Q0.5 0.5 2 0.5 H9 L11.5 3.5 H24 Q25.5 3.5 25.5 5 V20 Q25.5 21.5 24 21.5 H2 Q0.5 21.5 0.5 20 Z" fill="#e8a33d"/><rect x="0.5" y="5.5" width="25" height="16" rx="1.5" fill="#fbc75c"/><rect x="5.5" y="15.5" width="15" height="6" rx="1.5" fill="#1e74d0"/><rect x="8.5" y="18" width="9" height="1.6" fill="#0f4fa0"/></svg>
<div class="a" style="left:999.5px;top:40px;width:6px;height:3px;border-radius:1.5px;background:#858585"></div>
<svg style="left:1033.7px;top:11.5px" width="26" height="26" viewBox="0 0 26 26"><rect x="0" y="0" width="20" height="19" rx="2" fill="#f4f4f4"/><g fill="#c8362b"><rect x="2" y="2" width="3.5" height="3.5"/><rect x="7" y="2" width="3.5" height="3.5"/><rect x="12" y="2" width="3.5" height="3.5"/><rect x="2" y="7" width="3.5" height="3.5"/><rect x="2" y="12" width="3.5" height="3.5"/></g><path d="M16 5 V15.5 H5.5" stroke="#8a8a8a" stroke-width="2.2" fill="none"/><path d="M13 13 L22 17 M14 22 L17 14" stroke="#9a9a9a" stroke-width="1.6"/><circle cx="23.5" cy="17.5" r="2" stroke="#1e88e5" stroke-width="1.5" fill="none"/><circle cx="13.8" cy="23.2" r="2" stroke="#1e88e5" stroke-width="1.5" fill="none"/></svg>
<div class="a" style="left:1043.7px;top:40px;width:6px;height:3px;border-radius:1.5px;background:#858585"></div>
<svg style="left:1078.3px;top:11.5px" width="26" height="26" viewBox="0 0 26 26"><path d="M13 1.5 A11.3 11.3 0 1 1 7 22.4 L1.8 24 L3.4 19 A11.3 11.3 0 0 1 13 1.5 Z" fill="#e3e3e3" stroke="#1f8f45" stroke-width="2.2" stroke-linejoin="round"/><path d="M9 7.2 Q8 7 7.6 8.6 Q7.4 12 11 15.4 Q14.6 18.6 17.6 18 Q19 17.4 18.8 16.2 L16.2 14.8 L15 16 Q12.6 15 10.6 12.2 L11.6 10.8 L10.2 7.6 Z" fill="#1f8f45"/></svg>
<svg style="left:1122.5px;top:12px" width="25" height="25" viewBox="0 0 25 25"><circle cx="12.5" cy="12.5" r="12" fill="#1e74d0"/><path d="M12.5 0.5 A12 12 0 0 1 24.5 11 Q22 17 15 15.5 Q17 11 12.5 9.5 Q7 9 4 14 Q1 5 12.5 0.5 Z" fill="#35c1f1"/><path d="M14 1 A12 12 0 0 1 24.5 11.5 Q24 15.5 19 16 Q15.5 16 15.2 13.8 Q16.5 10 12.5 8.2 Q17 3 14 1 Z" fill="#4fbf7a"/><path d="M4 13.5 Q3 22 12.5 24.5 Q7.5 21 8.6 15.5 Q9.6 11.5 13 10.4 Q8 9 4 13.5 Z" fill="#0f4fa0"/></svg>
<svg style="left:1165.8px;top:11.5px" width="26" height="26" viewBox="0 0 26 26"><circle cx="13" cy="14" r="11.5" fill="#ff9a1f"/><path d="M13 2.5 Q20 0 24 8 Q26.5 16 21 22.5 Q15 27.5 7.5 24 Q1 20 1.8 12 Q3 6 6 5 Q5.5 8 7.5 9 Q9 4.5 13 2.5 Z" fill="#f2472c"/><path d="M18 1.5 Q22.5 5 23.8 10 Q25 15 22 20 Q23 12 18 8.5 Q19 5 18 1.5 Z" fill="#ffc12e"/><circle cx="13.5" cy="14" r="6" fill="#7a3fd1"/><path d="M8 11 Q11 8 16 10 Q13 11 13.5 13.5 Q10 14 8 11 Z" fill="#ff9a1f"/></svg>
<div class="a" style="left:1175.8px;top:40px;width:6px;height:3px;border-radius:1.5px;background:#858585"></div>
<svg style="left:1210.5px;top:13px" width="24" height="24" viewBox="0 0 24 24"><circle cx="12" cy="12" r="11" fill="#fbc116"/><path d="M12 12 L2.47 6.5 A11 11 0 0 1 21.53 6.5 Z" fill="#e33b2e"/><path d="M12 12 L2.47 6.5 A11 11 0 0 0 12 23 L17 14.9 Z" fill="#2ba24c"/><path d="M12 12 L21.53 6.5 H12 Z" fill="#e33b2e"/><circle cx="12" cy="12" r="5.2" fill="#fff"/><circle cx="12" cy="12" r="4.1" fill="#1a73e8"/></svg>
<svg style="left:1255px;top:13px" width="24" height="24" viewBox="0 0 24 24"><circle cx="10" cy="10" r="7.8" stroke="#1f1f1f" stroke-width="2.2" fill="none"/><path d="M15.8 15.8 L22.5 22.5" stroke="#1f1f1f" stroke-width="2.6" stroke-linecap="round"/></svg>
<svg style="left:1299.5px;top:12.5px" width="25" height="25" viewBox="0 0 25 25"><rect x="0" y="0" width="11.7" height="11.7" rx="1" fill="#38b6f5"/><rect x="13.3" y="0" width="11.7" height="11.7" rx="1" fill="#1f9bea"/><rect x="0" y="13.3" width="11.7" height="11.7" rx="1" fill="#1f9bea"/><rect x="13.3" y="13.3" width="11.7" height="11.7" rx="1" fill="#0f7fd6"/></svg>
</div>
</div>
</body>
</html>
